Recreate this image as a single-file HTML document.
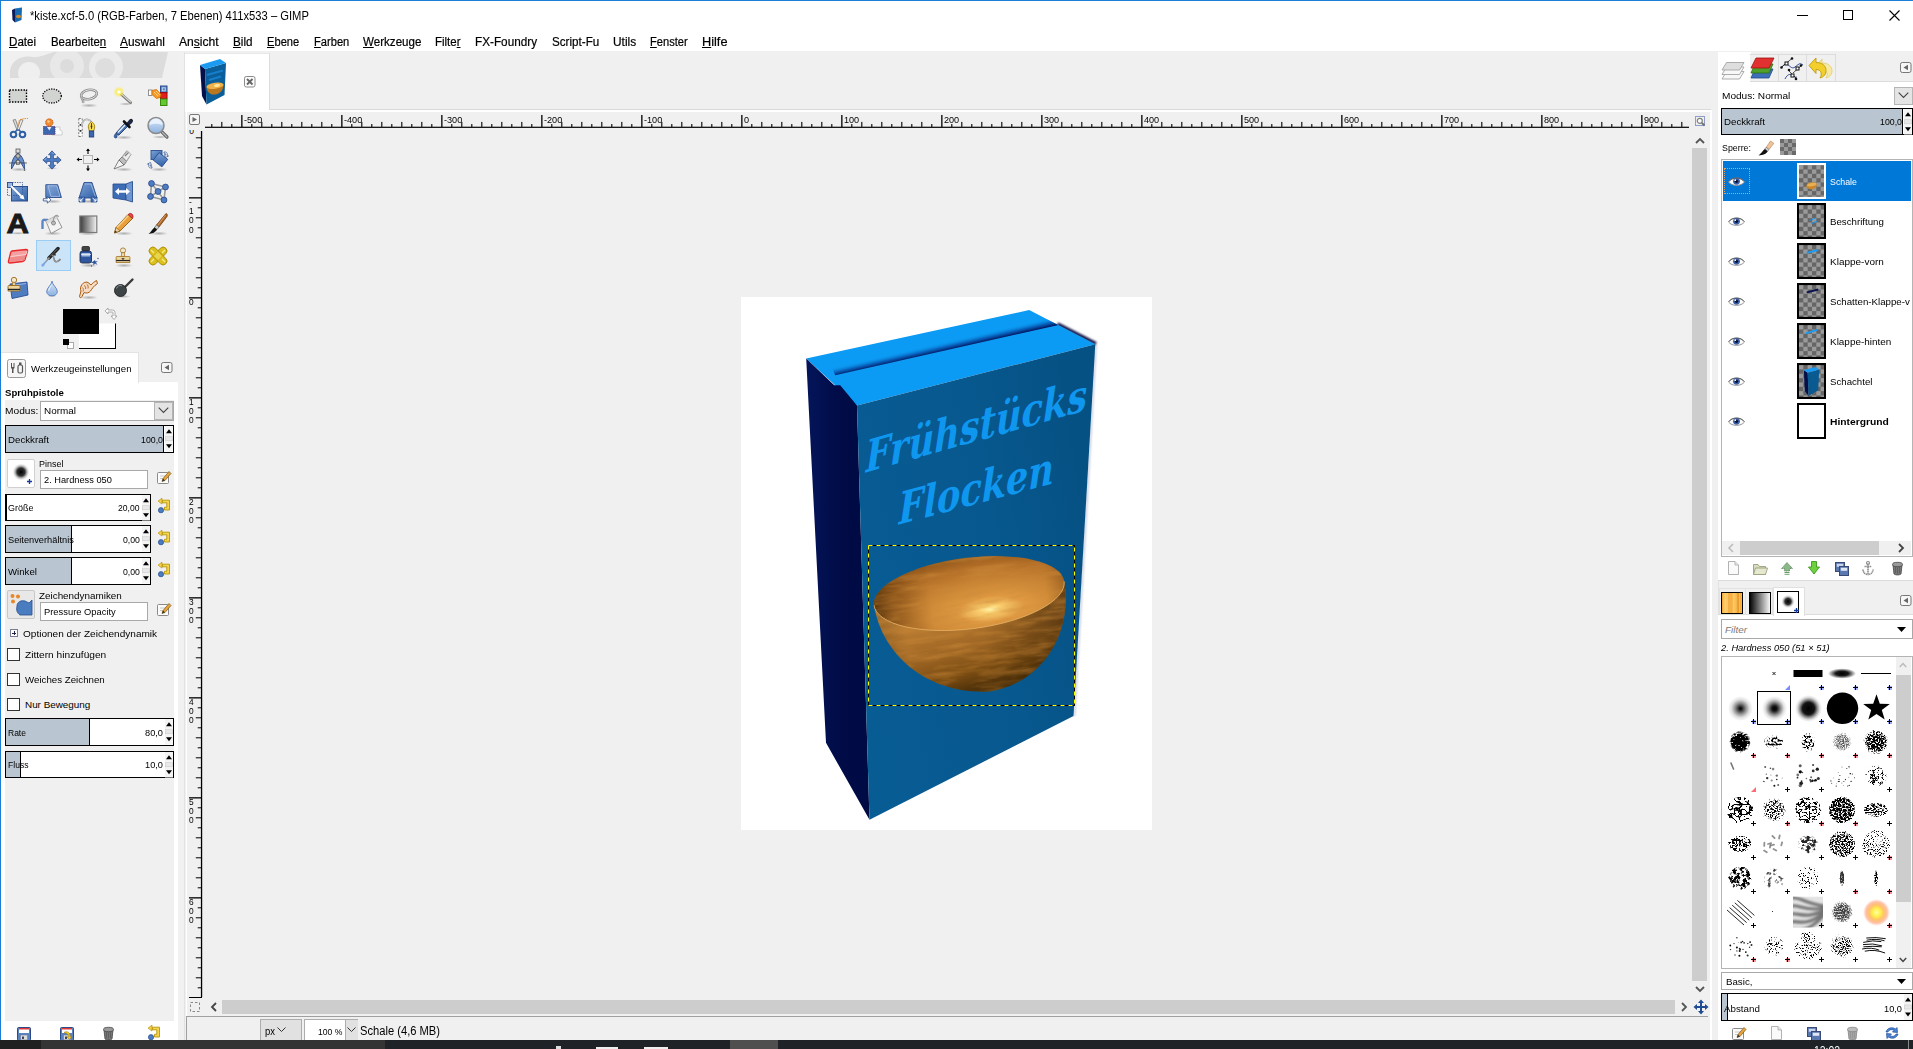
<!DOCTYPE html>
<html><head><meta charset="utf-8"><title>GIMP</title>
<style>
html,body{margin:0;padding:0;}
body{width:1913px;height:1049px;overflow:hidden;background:#f0f0f0;font-family:"Liberation Sans",sans-serif;position:relative;}
div{position:absolute;box-sizing:border-box;}
svg{position:absolute;overflow:visible;}
.t{font-family:"Liberation Sans",sans-serif;}
</style></head><body>
<div style="left:0px;top:0px;width:1913px;height:31px;background:#fff;"></div>
<div style="left:0px;top:31px;width:1913px;height:20px;background:#fff;"></div>
<div style="left:0px;top:0px;width:1913px;height:1px;background:#1a7fd4;"></div>
<div style="left:0px;top:0px;width:1px;height:1040px;background:#1a7fd4;"></div>
<svg style="left:11px;top:7px" width="12" height="17" viewBox="0 0 12 17"><polygon points="1,3 4,1.5 4,15.5 1.5,13" fill="#0a1a5a"/><polygon points="4,1.5 11,0.5 10.5,13 4,15.5" fill="#1769b0"/><polygon points="1,3 8,1 11,0.5 4,2.2" fill="#2a9cf0"/><ellipse cx="7.5" cy="9.5" rx="2.6" ry="1.8" fill="#d08a2a"/></svg>
<div class="t" style="left:30.3px;top:7.7px;height:16px;line-height:16px;font-size:12px;color:#000;white-space:nowrap;transform-origin:0 50%;transform:scaleX(0.934);">*kiste.xcf-5.0 (RGB-Farben, 7 Ebenen) 411x533 – GIMP</div>
<div style="left:1797px;top:15px;width:11px;height:1px;background:#000;"></div>
<div style="left:1843px;top:10px;width:10px;height:10px;border:1px solid #000;"></div>
<svg style="left:1889px;top:10px" width="11" height="11" viewBox="0 0 11 11"><path d="M0.5,0.5 L10.5,10.5 M10.5,0.5 L0.5,10.5" stroke="#000" stroke-width="1.1" fill="none"/></svg>
<div class="t" style="left:8.7px;top:33.7px;height:16px;line-height:17px;font-size:12px;-webkit-text-stroke:0.2px #000;white-space:nowrap;transform-origin:0 50%;transform:scaleX(0.967)"><u>D</u>atei</div>
<div class="t" style="left:50.5px;top:33.7px;height:16px;line-height:17px;font-size:12px;-webkit-text-stroke:0.2px #000;white-space:nowrap;transform-origin:0 50%;transform:scaleX(0.951)">Bearbeite<u>n</u></div>
<div class="t" style="left:120px;top:33.7px;height:16px;line-height:17px;font-size:12px;-webkit-text-stroke:0.2px #000;white-space:nowrap;transform-origin:0 50%;transform:scaleX(0.990)"><u>A</u>uswahl</div>
<div class="t" style="left:179.2px;top:33.7px;height:16px;line-height:17px;font-size:12px;-webkit-text-stroke:0.2px #000;white-space:nowrap;transform-origin:0 50%;transform:scaleX(1.009)">An<u>s</u>icht</div>
<div class="t" style="left:233.2px;top:33.7px;height:16px;line-height:17px;font-size:12px;-webkit-text-stroke:0.2px #000;white-space:nowrap;transform-origin:0 50%;transform:scaleX(0.975)"><u>B</u>ild</div>
<div class="t" style="left:267px;top:33.7px;height:16px;line-height:17px;font-size:12px;-webkit-text-stroke:0.2px #000;white-space:nowrap;transform-origin:0 50%;transform:scaleX(0.928)"><u>E</u>bene</div>
<div class="t" style="left:313.5px;top:33.7px;height:16px;line-height:17px;font-size:12px;-webkit-text-stroke:0.2px #000;white-space:nowrap;transform-origin:0 50%;transform:scaleX(0.928)"><u>F</u>arben</div>
<div class="t" style="left:362.7px;top:33.7px;height:16px;line-height:17px;font-size:12px;-webkit-text-stroke:0.2px #000;white-space:nowrap;transform-origin:0 50%;transform:scaleX(0.966)"><u>W</u>erkzeuge</div>
<div class="t" style="left:435.4px;top:33.7px;height:16px;line-height:17px;font-size:12px;-webkit-text-stroke:0.2px #000;white-space:nowrap;transform-origin:0 50%;transform:scaleX(0.956)">Filte<u>r</u></div>
<div class="t" style="left:475.2px;top:33.7px;height:16px;line-height:17px;font-size:12px;-webkit-text-stroke:0.2px #000;white-space:nowrap;transform-origin:0 50%;transform:scaleX(0.979)">FX-Foundry</div>
<div class="t" style="left:551.5px;top:33.7px;height:16px;line-height:17px;font-size:12px;-webkit-text-stroke:0.2px #000;white-space:nowrap;transform-origin:0 50%;transform:scaleX(0.970)">Script-Fu</div>
<div class="t" style="left:613px;top:33.7px;height:16px;line-height:17px;font-size:12px;-webkit-text-stroke:0.2px #000;white-space:nowrap;transform-origin:0 50%;transform:scaleX(0.990)">Utils</div>
<div class="t" style="left:650.4px;top:33.7px;height:16px;line-height:17px;font-size:12px;-webkit-text-stroke:0.2px #000;white-space:nowrap;transform-origin:0 50%;transform:scaleX(0.927)"><u>F</u>enster</div>
<div class="t" style="left:702px;top:33.7px;height:16px;line-height:17px;font-size:12px;-webkit-text-stroke:0.2px #000;white-space:nowrap;transform-origin:0 50%;transform:scaleX(1.062)"><u>H</u>ilfe</div>
<svg style="left:10px;top:52px;overflow:hidden" width="158" height="27" viewBox="0 0 158 27"><defs><clipPath id="wc"><path d="M0,26 L0,18 C2,8 12,3 22,5 C30,6 36,2 44,0 L158,0 L152,26 Z"/></clipPath></defs><g clip-path="url(#wc)"><rect width="158" height="27" fill="#dcdcdc"/><circle cx="19" cy="21" r="11" fill="#efefef"/><circle cx="57" cy="14" r="17" fill="#e8e8e8"/><circle cx="57" cy="14" r="7" fill="#dcdcdc"/><circle cx="96" cy="15" r="17" fill="#ebebeb"/><circle cx="95" cy="16" r="10" fill="#dedede"/></g></svg>
<div style="left:1px;top:381.5px;width:176.5px;height:658.5px;background:#fff;"></div>
<div style="left:1px;top:352px;width:137.5px;height:30.5px;background:#fff;border:1px solid #e3e3e3;border-bottom:none;border-left:none;"></div>
<div style="left:5px;top:400px;width:169px;height:620.5px;background:#f0f0f0;"></div>
<div style="left:177.5px;top:52px;width:7px;height:988px;background:#f1f1f1;"></div>
<div style="left:184.2px;top:52px;width:1px;height:988px;background:#e2e2e2;"></div>
<div style="left:185px;top:53px;width:84.5px;height:59px;background:#fff;border-right:1px solid #dcdcdc;border-top:1px solid #e8e8e8;"></div>
<div style="left:269px;top:109px;width:1442px;height:1px;background:#dadada;"></div>
<div style="left:186px;top:110px;width:1525px;height:2px;background:#fff;"></div>
<div style="left:1710px;top:110px;width:1.5px;height:930px;background:#fff;"></div>
<div style="left:186px;top:110px;width:1px;height:930px;background:#fff;"></div>
<div style="left:186px;top:1016px;width:1522px;height:1px;background:#a0a0a0;"></div>
<div style="left:186px;top:1016px;width:1px;height:24px;background:#a0a0a0;"></div>
<div style="left:259.5px;top:1018.5px;width:42.5px;height:24px;background:#e1e1e1;border:1px solid #adadad;"></div>
<div class="t" style="left:264.6px;top:1023.7px;height:15px;line-height:15px;font-size:11px;color:#000;white-space:nowrap;transform-origin:0 50%;transform:scaleX(0.861);">px</div>
<svg style="left:277px;top:1027px" width="9" height="6" viewBox="0 0 9 6"><path d="M0.5,0.5 L4.5,4.5 L8.5,0.5" stroke="#333" fill="none"/></svg>
<div style="left:303.5px;top:1018.5px;width:54.5px;height:24px;background:#fff;border:1px solid #adadad;"></div>
<div style="left:345px;top:1019.5px;width:12.5px;height:22px;background:#e1e1e1;border-left:1px solid #adadad;"></div>
<div class="t" style="left:318px;top:1024.65px;height:13px;line-height:13px;font-size:9.9px;color:#000;white-space:nowrap;transform-origin:0 50%;transform:scaleX(0.873);">100 %</div>
<svg style="left:347px;top:1027px" width="9" height="6" viewBox="0 0 9 6"><path d="M0.5,0.5 L4.5,4.5 L8.5,0.5" stroke="#333" fill="none"/></svg>
<div class="t" style="left:360.3px;top:1023.3px;height:16px;line-height:16px;font-size:12px;color:#000;white-space:nowrap;transform-origin:0 50%;transform:scaleX(0.930);">Schale (4,6 MB)</div>
<svg style="left:0;top:0" width="1913" height="1049"><rect x="205" y="126.7" width="1484" height="1.2" fill="#000"/><rect x="211.25" y="124" width="1.1" height="3" fill="#000"/><rect x="221.25" y="121.9" width="1.1" height="5" fill="#000"/><rect x="231.25" y="124" width="1.1" height="3" fill="#000"/><rect x="241.2" y="115" width="1.3" height="12" fill="#000"/><rect x="251.25" y="124" width="1.1" height="3" fill="#000"/><rect x="261.25" y="121.9" width="1.1" height="5" fill="#000"/><rect x="271.25" y="124" width="1.1" height="3" fill="#000"/><rect x="281.25" y="121.9" width="1.1" height="5" fill="#000"/><rect x="291.25" y="124" width="1.1" height="3" fill="#000"/><rect x="301.25" y="121.9" width="1.1" height="5" fill="#000"/><rect x="311.25" y="124" width="1.1" height="3" fill="#000"/><rect x="321.25" y="121.9" width="1.1" height="5" fill="#000"/><rect x="331.25" y="124" width="1.1" height="3" fill="#000"/><rect x="341.2" y="115" width="1.3" height="12" fill="#000"/><rect x="351.25" y="124" width="1.1" height="3" fill="#000"/><rect x="361.25" y="121.9" width="1.1" height="5" fill="#000"/><rect x="371.25" y="124" width="1.1" height="3" fill="#000"/><rect x="381.25" y="121.9" width="1.1" height="5" fill="#000"/><rect x="391.25" y="124" width="1.1" height="3" fill="#000"/><rect x="401.25" y="121.9" width="1.1" height="5" fill="#000"/><rect x="411.25" y="124" width="1.1" height="3" fill="#000"/><rect x="421.25" y="121.9" width="1.1" height="5" fill="#000"/><rect x="431.25" y="124" width="1.1" height="3" fill="#000"/><rect x="441.2" y="115" width="1.3" height="12" fill="#000"/><rect x="451.25" y="124" width="1.1" height="3" fill="#000"/><rect x="461.25" y="121.9" width="1.1" height="5" fill="#000"/><rect x="471.25" y="124" width="1.1" height="3" fill="#000"/><rect x="481.25" y="121.9" width="1.1" height="5" fill="#000"/><rect x="491.25" y="124" width="1.1" height="3" fill="#000"/><rect x="501.25" y="121.9" width="1.1" height="5" fill="#000"/><rect x="511.25" y="124" width="1.1" height="3" fill="#000"/><rect x="521.25" y="121.9" width="1.1" height="5" fill="#000"/><rect x="531.25" y="124" width="1.1" height="3" fill="#000"/><rect x="541.2" y="115" width="1.3" height="12" fill="#000"/><rect x="551.25" y="124" width="1.1" height="3" fill="#000"/><rect x="561.25" y="121.9" width="1.1" height="5" fill="#000"/><rect x="571.25" y="124" width="1.1" height="3" fill="#000"/><rect x="581.25" y="121.9" width="1.1" height="5" fill="#000"/><rect x="591.25" y="124" width="1.1" height="3" fill="#000"/><rect x="601.25" y="121.9" width="1.1" height="5" fill="#000"/><rect x="611.25" y="124" width="1.1" height="3" fill="#000"/><rect x="621.25" y="121.9" width="1.1" height="5" fill="#000"/><rect x="631.25" y="124" width="1.1" height="3" fill="#000"/><rect x="641.2" y="115" width="1.3" height="12" fill="#000"/><rect x="651.25" y="124" width="1.1" height="3" fill="#000"/><rect x="661.25" y="121.9" width="1.1" height="5" fill="#000"/><rect x="671.25" y="124" width="1.1" height="3" fill="#000"/><rect x="681.25" y="121.9" width="1.1" height="5" fill="#000"/><rect x="691.25" y="124" width="1.1" height="3" fill="#000"/><rect x="701.25" y="121.9" width="1.1" height="5" fill="#000"/><rect x="711.25" y="124" width="1.1" height="3" fill="#000"/><rect x="721.25" y="121.9" width="1.1" height="5" fill="#000"/><rect x="731.25" y="124" width="1.1" height="3" fill="#000"/><rect x="741.2" y="115" width="1.3" height="12" fill="#000"/><rect x="751.25" y="124" width="1.1" height="3" fill="#000"/><rect x="761.25" y="121.9" width="1.1" height="5" fill="#000"/><rect x="771.25" y="124" width="1.1" height="3" fill="#000"/><rect x="781.25" y="121.9" width="1.1" height="5" fill="#000"/><rect x="791.25" y="124" width="1.1" height="3" fill="#000"/><rect x="801.25" y="121.9" width="1.1" height="5" fill="#000"/><rect x="811.25" y="124" width="1.1" height="3" fill="#000"/><rect x="821.25" y="121.9" width="1.1" height="5" fill="#000"/><rect x="831.25" y="124" width="1.1" height="3" fill="#000"/><rect x="841.2" y="115" width="1.3" height="12" fill="#000"/><rect x="851.25" y="124" width="1.1" height="3" fill="#000"/><rect x="861.25" y="121.9" width="1.1" height="5" fill="#000"/><rect x="871.25" y="124" width="1.1" height="3" fill="#000"/><rect x="881.25" y="121.9" width="1.1" height="5" fill="#000"/><rect x="891.25" y="124" width="1.1" height="3" fill="#000"/><rect x="901.25" y="121.9" width="1.1" height="5" fill="#000"/><rect x="911.25" y="124" width="1.1" height="3" fill="#000"/><rect x="921.25" y="121.9" width="1.1" height="5" fill="#000"/><rect x="931.25" y="124" width="1.1" height="3" fill="#000"/><rect x="941.2" y="115" width="1.3" height="12" fill="#000"/><rect x="951.25" y="124" width="1.1" height="3" fill="#000"/><rect x="961.25" y="121.9" width="1.1" height="5" fill="#000"/><rect x="971.25" y="124" width="1.1" height="3" fill="#000"/><rect x="981.25" y="121.9" width="1.1" height="5" fill="#000"/><rect x="991.25" y="124" width="1.1" height="3" fill="#000"/><rect x="1001.25" y="121.9" width="1.1" height="5" fill="#000"/><rect x="1011.25" y="124" width="1.1" height="3" fill="#000"/><rect x="1021.25" y="121.9" width="1.1" height="5" fill="#000"/><rect x="1031.25" y="124" width="1.1" height="3" fill="#000"/><rect x="1041.2" y="115" width="1.3" height="12" fill="#000"/><rect x="1051.25" y="124" width="1.1" height="3" fill="#000"/><rect x="1061.25" y="121.9" width="1.1" height="5" fill="#000"/><rect x="1071.25" y="124" width="1.1" height="3" fill="#000"/><rect x="1081.25" y="121.9" width="1.1" height="5" fill="#000"/><rect x="1091.25" y="124" width="1.1" height="3" fill="#000"/><rect x="1101.25" y="121.9" width="1.1" height="5" fill="#000"/><rect x="1111.25" y="124" width="1.1" height="3" fill="#000"/><rect x="1121.25" y="121.9" width="1.1" height="5" fill="#000"/><rect x="1131.25" y="124" width="1.1" height="3" fill="#000"/><rect x="1141.2" y="115" width="1.3" height="12" fill="#000"/><rect x="1151.25" y="124" width="1.1" height="3" fill="#000"/><rect x="1161.25" y="121.9" width="1.1" height="5" fill="#000"/><rect x="1171.25" y="124" width="1.1" height="3" fill="#000"/><rect x="1181.25" y="121.9" width="1.1" height="5" fill="#000"/><rect x="1191.25" y="124" width="1.1" height="3" fill="#000"/><rect x="1201.25" y="121.9" width="1.1" height="5" fill="#000"/><rect x="1211.25" y="124" width="1.1" height="3" fill="#000"/><rect x="1221.25" y="121.9" width="1.1" height="5" fill="#000"/><rect x="1231.25" y="124" width="1.1" height="3" fill="#000"/><rect x="1241.2" y="115" width="1.3" height="12" fill="#000"/><rect x="1251.25" y="124" width="1.1" height="3" fill="#000"/><rect x="1261.25" y="121.9" width="1.1" height="5" fill="#000"/><rect x="1271.25" y="124" width="1.1" height="3" fill="#000"/><rect x="1281.25" y="121.9" width="1.1" height="5" fill="#000"/><rect x="1291.25" y="124" width="1.1" height="3" fill="#000"/><rect x="1301.25" y="121.9" width="1.1" height="5" fill="#000"/><rect x="1311.25" y="124" width="1.1" height="3" fill="#000"/><rect x="1321.25" y="121.9" width="1.1" height="5" fill="#000"/><rect x="1331.25" y="124" width="1.1" height="3" fill="#000"/><rect x="1341.2" y="115" width="1.3" height="12" fill="#000"/><rect x="1351.25" y="124" width="1.1" height="3" fill="#000"/><rect x="1361.25" y="121.9" width="1.1" height="5" fill="#000"/><rect x="1371.25" y="124" width="1.1" height="3" fill="#000"/><rect x="1381.25" y="121.9" width="1.1" height="5" fill="#000"/><rect x="1391.25" y="124" width="1.1" height="3" fill="#000"/><rect x="1401.25" y="121.9" width="1.1" height="5" fill="#000"/><rect x="1411.25" y="124" width="1.1" height="3" fill="#000"/><rect x="1421.25" y="121.9" width="1.1" height="5" fill="#000"/><rect x="1431.25" y="124" width="1.1" height="3" fill="#000"/><rect x="1441.2" y="115" width="1.3" height="12" fill="#000"/><rect x="1451.25" y="124" width="1.1" height="3" fill="#000"/><rect x="1461.25" y="121.9" width="1.1" height="5" fill="#000"/><rect x="1471.25" y="124" width="1.1" height="3" fill="#000"/><rect x="1481.25" y="121.9" width="1.1" height="5" fill="#000"/><rect x="1491.25" y="124" width="1.1" height="3" fill="#000"/><rect x="1501.25" y="121.9" width="1.1" height="5" fill="#000"/><rect x="1511.25" y="124" width="1.1" height="3" fill="#000"/><rect x="1521.25" y="121.9" width="1.1" height="5" fill="#000"/><rect x="1531.25" y="124" width="1.1" height="3" fill="#000"/><rect x="1541.2" y="115" width="1.3" height="12" fill="#000"/><rect x="1551.25" y="124" width="1.1" height="3" fill="#000"/><rect x="1561.25" y="121.9" width="1.1" height="5" fill="#000"/><rect x="1571.25" y="124" width="1.1" height="3" fill="#000"/><rect x="1581.25" y="121.9" width="1.1" height="5" fill="#000"/><rect x="1591.25" y="124" width="1.1" height="3" fill="#000"/><rect x="1601.25" y="121.9" width="1.1" height="5" fill="#000"/><rect x="1611.25" y="124" width="1.1" height="3" fill="#000"/><rect x="1621.25" y="121.9" width="1.1" height="5" fill="#000"/><rect x="1631.25" y="124" width="1.1" height="3" fill="#000"/><rect x="1641.2" y="115" width="1.3" height="12" fill="#000"/><rect x="1651.25" y="124" width="1.1" height="3" fill="#000"/><rect x="1661.25" y="121.9" width="1.1" height="5" fill="#000"/><rect x="1671.25" y="124" width="1.1" height="3" fill="#000"/><rect x="1681.25" y="121.9" width="1.1" height="5" fill="#000"/><rect x="200.9" y="131" width="1.3" height="866" fill="#000"/><rect x="189" y="997" width="13" height="1" fill="#000"/><rect x="195.8" y="137.3" width="5.6" height="1" fill="#000"/><rect x="197.7" y="147.3" width="3.7" height="1" fill="#000"/><rect x="195.8" y="157.3" width="5.6" height="1" fill="#000"/><rect x="197.7" y="167.3" width="3.7" height="1" fill="#000"/><rect x="195.8" y="177.3" width="5.6" height="1" fill="#000"/><rect x="197.7" y="187.3" width="3.7" height="1" fill="#000"/><rect x="189" y="197.2" width="12" height="1.3" fill="#000"/><rect x="197.7" y="207.3" width="3.7" height="1" fill="#000"/><rect x="195.8" y="217.3" width="5.6" height="1" fill="#000"/><rect x="197.7" y="227.3" width="3.7" height="1" fill="#000"/><rect x="195.8" y="237.3" width="5.6" height="1" fill="#000"/><rect x="197.7" y="247.3" width="3.7" height="1" fill="#000"/><rect x="195.8" y="257.3" width="5.6" height="1" fill="#000"/><rect x="197.7" y="267.3" width="3.7" height="1" fill="#000"/><rect x="195.8" y="277.3" width="5.6" height="1" fill="#000"/><rect x="197.7" y="287.3" width="3.7" height="1" fill="#000"/><rect x="189" y="297.2" width="12" height="1.3" fill="#000"/><rect x="197.7" y="307.3" width="3.7" height="1" fill="#000"/><rect x="195.8" y="317.3" width="5.6" height="1" fill="#000"/><rect x="197.7" y="327.3" width="3.7" height="1" fill="#000"/><rect x="195.8" y="337.3" width="5.6" height="1" fill="#000"/><rect x="197.7" y="347.3" width="3.7" height="1" fill="#000"/><rect x="195.8" y="357.3" width="5.6" height="1" fill="#000"/><rect x="197.7" y="367.3" width="3.7" height="1" fill="#000"/><rect x="195.8" y="377.3" width="5.6" height="1" fill="#000"/><rect x="197.7" y="387.3" width="3.7" height="1" fill="#000"/><rect x="189" y="397.2" width="12" height="1.3" fill="#000"/><rect x="197.7" y="407.3" width="3.7" height="1" fill="#000"/><rect x="195.8" y="417.3" width="5.6" height="1" fill="#000"/><rect x="197.7" y="427.3" width="3.7" height="1" fill="#000"/><rect x="195.8" y="437.3" width="5.6" height="1" fill="#000"/><rect x="197.7" y="447.3" width="3.7" height="1" fill="#000"/><rect x="195.8" y="457.3" width="5.6" height="1" fill="#000"/><rect x="197.7" y="467.3" width="3.7" height="1" fill="#000"/><rect x="195.8" y="477.3" width="5.6" height="1" fill="#000"/><rect x="197.7" y="487.3" width="3.7" height="1" fill="#000"/><rect x="189" y="497.2" width="12" height="1.3" fill="#000"/><rect x="197.7" y="507.3" width="3.7" height="1" fill="#000"/><rect x="195.8" y="517.3" width="5.6" height="1" fill="#000"/><rect x="197.7" y="527.3" width="3.7" height="1" fill="#000"/><rect x="195.8" y="537.3" width="5.6" height="1" fill="#000"/><rect x="197.7" y="547.3" width="3.7" height="1" fill="#000"/><rect x="195.8" y="557.3" width="5.6" height="1" fill="#000"/><rect x="197.7" y="567.3" width="3.7" height="1" fill="#000"/><rect x="195.8" y="577.3" width="5.6" height="1" fill="#000"/><rect x="197.7" y="587.3" width="3.7" height="1" fill="#000"/><rect x="189" y="597.2" width="12" height="1.3" fill="#000"/><rect x="197.7" y="607.3" width="3.7" height="1" fill="#000"/><rect x="195.8" y="617.3" width="5.6" height="1" fill="#000"/><rect x="197.7" y="627.3" width="3.7" height="1" fill="#000"/><rect x="195.8" y="637.3" width="5.6" height="1" fill="#000"/><rect x="197.7" y="647.3" width="3.7" height="1" fill="#000"/><rect x="195.8" y="657.3" width="5.6" height="1" fill="#000"/><rect x="197.7" y="667.3" width="3.7" height="1" fill="#000"/><rect x="195.8" y="677.3" width="5.6" height="1" fill="#000"/><rect x="197.7" y="687.3" width="3.7" height="1" fill="#000"/><rect x="189" y="697.2" width="12" height="1.3" fill="#000"/><rect x="197.7" y="707.3" width="3.7" height="1" fill="#000"/><rect x="195.8" y="717.3" width="5.6" height="1" fill="#000"/><rect x="197.7" y="727.3" width="3.7" height="1" fill="#000"/><rect x="195.8" y="737.3" width="5.6" height="1" fill="#000"/><rect x="197.7" y="747.3" width="3.7" height="1" fill="#000"/><rect x="195.8" y="757.3" width="5.6" height="1" fill="#000"/><rect x="197.7" y="767.3" width="3.7" height="1" fill="#000"/><rect x="195.8" y="777.3" width="5.6" height="1" fill="#000"/><rect x="197.7" y="787.3" width="3.7" height="1" fill="#000"/><rect x="189" y="797.2" width="12" height="1.3" fill="#000"/><rect x="197.7" y="807.3" width="3.7" height="1" fill="#000"/><rect x="195.8" y="817.3" width="5.6" height="1" fill="#000"/><rect x="197.7" y="827.3" width="3.7" height="1" fill="#000"/><rect x="195.8" y="837.3" width="5.6" height="1" fill="#000"/><rect x="197.7" y="847.3" width="3.7" height="1" fill="#000"/><rect x="195.8" y="857.3" width="5.6" height="1" fill="#000"/><rect x="197.7" y="867.3" width="3.7" height="1" fill="#000"/><rect x="195.8" y="877.3" width="5.6" height="1" fill="#000"/><rect x="197.7" y="887.3" width="3.7" height="1" fill="#000"/><rect x="189" y="897.2" width="12" height="1.3" fill="#000"/><rect x="197.7" y="907.3" width="3.7" height="1" fill="#000"/><rect x="195.8" y="917.3" width="5.6" height="1" fill="#000"/><rect x="197.7" y="927.3" width="3.7" height="1" fill="#000"/><rect x="195.8" y="937.3" width="5.6" height="1" fill="#000"/><rect x="197.7" y="947.3" width="3.7" height="1" fill="#000"/><rect x="195.8" y="957.3" width="5.6" height="1" fill="#000"/><rect x="197.7" y="967.3" width="3.7" height="1" fill="#000"/><rect x="195.8" y="977.3" width="5.6" height="1" fill="#000"/><rect x="197.7" y="987.3" width="3.7" height="1" fill="#000"/></svg>
<div class="t" style="left:243.7px;top:114.35px;height:12px;line-height:12px;font-size:8.5px;color:#000;white-space:nowrap;transform-origin:0 50%;transform:scaleX(1.070);">-500</div>
<div class="t" style="left:343.7px;top:114.35px;height:12px;line-height:12px;font-size:8.5px;color:#000;white-space:nowrap;transform-origin:0 50%;transform:scaleX(1.070);">-400</div>
<div class="t" style="left:443.7px;top:114.35px;height:12px;line-height:12px;font-size:8.5px;color:#000;white-space:nowrap;transform-origin:0 50%;transform:scaleX(1.070);">-300</div>
<div class="t" style="left:543.7px;top:114.35px;height:12px;line-height:12px;font-size:8.5px;color:#000;white-space:nowrap;transform-origin:0 50%;transform:scaleX(1.070);">-200</div>
<div class="t" style="left:643.7px;top:114.35px;height:12px;line-height:12px;font-size:8.5px;color:#000;white-space:nowrap;transform-origin:0 50%;transform:scaleX(1.070);">-100</div>
<div class="t" style="left:743.7px;top:114.35px;height:12px;line-height:12px;font-size:8.5px;color:#000;white-space:nowrap;transform-origin:0 50%;transform:scaleX(1.070);">0</div>
<div class="t" style="left:843.7px;top:114.35px;height:12px;line-height:12px;font-size:8.5px;color:#000;white-space:nowrap;transform-origin:0 50%;transform:scaleX(1.070);">100</div>
<div class="t" style="left:943.7px;top:114.35px;height:12px;line-height:12px;font-size:8.5px;color:#000;white-space:nowrap;transform-origin:0 50%;transform:scaleX(1.070);">200</div>
<div class="t" style="left:1043.7px;top:114.35px;height:12px;line-height:12px;font-size:8.5px;color:#000;white-space:nowrap;transform-origin:0 50%;transform:scaleX(1.070);">300</div>
<div class="t" style="left:1143.7px;top:114.35px;height:12px;line-height:12px;font-size:8.5px;color:#000;white-space:nowrap;transform-origin:0 50%;transform:scaleX(1.070);">400</div>
<div class="t" style="left:1243.7px;top:114.35px;height:12px;line-height:12px;font-size:8.5px;color:#000;white-space:nowrap;transform-origin:0 50%;transform:scaleX(1.070);">500</div>
<div class="t" style="left:1343.7px;top:114.35px;height:12px;line-height:12px;font-size:8.5px;color:#000;white-space:nowrap;transform-origin:0 50%;transform:scaleX(1.070);">600</div>
<div class="t" style="left:1443.7px;top:114.35px;height:12px;line-height:12px;font-size:8.5px;color:#000;white-space:nowrap;transform-origin:0 50%;transform:scaleX(1.070);">700</div>
<div class="t" style="left:1543.7px;top:114.35px;height:12px;line-height:12px;font-size:8.5px;color:#000;white-space:nowrap;transform-origin:0 50%;transform:scaleX(1.070);">800</div>
<div class="t" style="left:1643.7px;top:114.35px;height:12px;line-height:12px;font-size:8.5px;color:#000;white-space:nowrap;transform-origin:0 50%;transform:scaleX(1.070);">900</div>
<div class="t" style="left:189.3px;top:195.75px;height:12px;line-height:12px;font-size:8.5px;color:#000;white-space:nowrap;transform-origin:0 50%;transform:scaleX(0.980);">-</div>
<div class="t" style="left:189.3px;top:205.05px;height:12px;line-height:12px;font-size:8.5px;color:#000;white-space:nowrap;transform-origin:0 50%;transform:scaleX(0.980);">1</div>
<div class="t" style="left:189.3px;top:214.35px;height:12px;line-height:12px;font-size:8.5px;color:#000;white-space:nowrap;transform-origin:0 50%;transform:scaleX(0.980);">0</div>
<div class="t" style="left:189.3px;top:223.65px;height:12px;line-height:12px;font-size:8.5px;color:#000;white-space:nowrap;transform-origin:0 50%;transform:scaleX(0.980);">0</div>
<div class="t" style="left:189.3px;top:295.75px;height:12px;line-height:12px;font-size:8.5px;color:#000;white-space:nowrap;transform-origin:0 50%;transform:scaleX(0.980);">0</div>
<div class="t" style="left:189.3px;top:395.75px;height:12px;line-height:12px;font-size:8.5px;color:#000;white-space:nowrap;transform-origin:0 50%;transform:scaleX(0.980);">1</div>
<div class="t" style="left:189.3px;top:405.05px;height:12px;line-height:12px;font-size:8.5px;color:#000;white-space:nowrap;transform-origin:0 50%;transform:scaleX(0.980);">0</div>
<div class="t" style="left:189.3px;top:414.35px;height:12px;line-height:12px;font-size:8.5px;color:#000;white-space:nowrap;transform-origin:0 50%;transform:scaleX(0.980);">0</div>
<div class="t" style="left:189.3px;top:495.75px;height:12px;line-height:12px;font-size:8.5px;color:#000;white-space:nowrap;transform-origin:0 50%;transform:scaleX(0.980);">2</div>
<div class="t" style="left:189.3px;top:505.05px;height:12px;line-height:12px;font-size:8.5px;color:#000;white-space:nowrap;transform-origin:0 50%;transform:scaleX(0.980);">0</div>
<div class="t" style="left:189.3px;top:514.35px;height:12px;line-height:12px;font-size:8.5px;color:#000;white-space:nowrap;transform-origin:0 50%;transform:scaleX(0.980);">0</div>
<div class="t" style="left:189.3px;top:595.75px;height:12px;line-height:12px;font-size:8.5px;color:#000;white-space:nowrap;transform-origin:0 50%;transform:scaleX(0.980);">3</div>
<div class="t" style="left:189.3px;top:605.05px;height:12px;line-height:12px;font-size:8.5px;color:#000;white-space:nowrap;transform-origin:0 50%;transform:scaleX(0.980);">0</div>
<div class="t" style="left:189.3px;top:614.35px;height:12px;line-height:12px;font-size:8.5px;color:#000;white-space:nowrap;transform-origin:0 50%;transform:scaleX(0.980);">0</div>
<div class="t" style="left:189.3px;top:695.75px;height:12px;line-height:12px;font-size:8.5px;color:#000;white-space:nowrap;transform-origin:0 50%;transform:scaleX(0.980);">4</div>
<div class="t" style="left:189.3px;top:705.05px;height:12px;line-height:12px;font-size:8.5px;color:#000;white-space:nowrap;transform-origin:0 50%;transform:scaleX(0.980);">0</div>
<div class="t" style="left:189.3px;top:714.35px;height:12px;line-height:12px;font-size:8.5px;color:#000;white-space:nowrap;transform-origin:0 50%;transform:scaleX(0.980);">0</div>
<div class="t" style="left:189.3px;top:795.75px;height:12px;line-height:12px;font-size:8.5px;color:#000;white-space:nowrap;transform-origin:0 50%;transform:scaleX(0.980);">5</div>
<div class="t" style="left:189.3px;top:805.05px;height:12px;line-height:12px;font-size:8.5px;color:#000;white-space:nowrap;transform-origin:0 50%;transform:scaleX(0.980);">0</div>
<div class="t" style="left:189.3px;top:814.35px;height:12px;line-height:12px;font-size:8.5px;color:#000;white-space:nowrap;transform-origin:0 50%;transform:scaleX(0.980);">0</div>
<div class="t" style="left:189.3px;top:895.75px;height:12px;line-height:12px;font-size:8.5px;color:#000;white-space:nowrap;transform-origin:0 50%;transform:scaleX(0.980);">6</div>
<div class="t" style="left:189.3px;top:905.05px;height:12px;line-height:12px;font-size:8.5px;color:#000;white-space:nowrap;transform-origin:0 50%;transform:scaleX(0.980);">0</div>
<div class="t" style="left:189.3px;top:914.35px;height:12px;line-height:12px;font-size:8.5px;color:#000;white-space:nowrap;transform-origin:0 50%;transform:scaleX(0.980);">0</div>
<div style="left:186px;top:130px;width:15px;height:6px;overflow:hidden"><div class="t" style="left:3.3px;top:-5.5px;height:12px;line-height:12px;font-size:8.5px;color:#000">0</div></div>
<svg style="left:189px;top:114px" width="12" height="12" viewBox="0 0 12 12"><rect x="0.5" y="0.5" width="10" height="10" rx="1.5" fill="#f4f4f4" stroke="#777"/><path d="M3.5,3 L8,5.5 L3.5,8 Z" fill="#666"/></svg>
<svg style="left:1694px;top:115px" width="12" height="12" viewBox="0 0 12 12"><rect x="1.500" y="1.500" width="9" height="9" fill="none" stroke="#2a4a9a" stroke-width="1" stroke-dasharray="1 1"/><circle cx="5.800" cy="5.800" r="2.500" fill="#fff" stroke="#808080" stroke-width="1.200"/><path d="M7.800,7.800 L10.500,10.500" stroke="#707070" stroke-width="1.800"/></svg>
<div style="left:1692px;top:148px;width:15px;height:833px;background:#cdcdcd;"></div>
<svg style="left:1695px;top:137px" width="10" height="7" viewBox="0 0 10 7"><path d="M1,6 L5,2 L9,6" stroke="#555" stroke-width="1.8" fill="none"/></svg>
<svg style="left:1695px;top:986px" width="10" height="7" viewBox="0 0 10 7"><path d="M1,1 L5,5 L9,1" stroke="#555" stroke-width="1.8" fill="none"/></svg>
<div style="left:222px;top:999.5px;width:1453px;height:14px;background:#cdcdcd;"></div>
<svg style="left:210px;top:1002px" width="7" height="10" viewBox="0 0 7 10"><path d="M6,1 L2,5 L6,9" stroke="#444" stroke-width="1.8" fill="none"/></svg>
<svg style="left:1681px;top:1002px" width="7" height="10" viewBox="0 0 7 10"><path d="M1,1 L5,5 L1,9" stroke="#555" stroke-width="1.8" fill="none"/></svg>
<svg style="left:190px;top:1002px" width="11" height="11" viewBox="0 0 11 11"><rect x="0.5" y="0.5" width="9" height="9" fill="none" stroke="#888" stroke-dasharray="2.5 2"/></svg>
<svg style="left:1693px;top:999px" width="16" height="16" viewBox="0 0 16 16"><path d="M8,0.5 L11,4 L9,4 L9,7 L12,7 L12,5 L15.5,8 L12,11 L12,9 L9,9 L9,12 L11,12 L8,15.5 L5,12 L7,12 L7,9 L4,9 L4,11 L0.5,8 L4,5 L4,7 L7,7 L7,4 L5,4 Z" fill="#1f4a94"/></svg>
<svg style="left:0;top:0" width="1913" height="1049">
<defs>
<linearGradient id="gfront" x1="857" y1="600" x2="1095" y2="560" gradientUnits="userSpaceOnUse"><stop offset="0" stop-color="#085c94"/><stop offset="0.6" stop-color="#07588e"/><stop offset="1" stop-color="#065184"/></linearGradient>
<linearGradient id="gleft" x1="806" y1="500" x2="868" y2="500" gradientUnits="userSpaceOnUse"><stop offset="0" stop-color="#04155a"/><stop offset="0.5" stop-color="#010c48"/><stop offset="1" stop-color="#000b44"/></linearGradient>
<linearGradient id="gshadow" x1="946" y1="350.5" x2="944" y2="341.8" gradientUnits="userSpaceOnUse"><stop offset="0" stop-color="#03145e" stop-opacity="1"/><stop offset="0.4" stop-color="#0545a0" stop-opacity="0.7"/><stop offset="1" stop-color="#0b9bf4" stop-opacity="0"/></linearGradient>
<radialGradient id="gin" cx="0.6" cy="0.76" r="0.8"><stop offset="0" stop-color="#fff3a8"/><stop offset="0.07" stop-color="#fbd070"/><stop offset="0.22" stop-color="#e09a42"/><stop offset="0.5" stop-color="#c98434"/><stop offset="0.8" stop-color="#b06c26"/><stop offset="1" stop-color="#8e561a"/></radialGradient>
<linearGradient id="ginl" x1="0" y1="0" x2="1" y2="0"><stop offset="0" stop-color="#3e2406" stop-opacity="0.8"/><stop offset="0.1" stop-color="#5a340a" stop-opacity="0.45"/><stop offset="0.3" stop-color="#6a3c0c" stop-opacity="0"/><stop offset="0.9" stop-color="#6a3c0c" stop-opacity="0"/><stop offset="1" stop-color="#5a3408" stop-opacity="0.3"/></linearGradient>
<linearGradient id="gout" x1="0" y1="0" x2="0.25" y2="1"><stop offset="0" stop-color="#cf9044"/><stop offset="0.3" stop-color="#ba7c32"/><stop offset="0.6" stop-color="#9e6624"/><stop offset="0.85" stop-color="#7a4c12"/><stop offset="1" stop-color="#52330a"/></linearGradient>
<linearGradient id="goutr" x1="0" y1="0" x2="1" y2="0"><stop offset="0" stop-color="#3a2204" stop-opacity="0.3"/><stop offset="0.15" stop-color="#3a2204" stop-opacity="0"/><stop offset="0.55" stop-color="#3a2204" stop-opacity="0"/><stop offset="1" stop-color="#2e1a02" stop-opacity="0.6"/></linearGradient>
<filter id="wood" x="0" y="0" width="1" height="1"><feTurbulence type="fractalNoise" baseFrequency="0.025 0.16" numOctaves="4" seed="4"/><feColorMatrix type="matrix" values="0 0 0 0 0.6  0 0 0 0 0.25  0 0 0 0 0.04  2.2 1.2 0 0 -1.45"/><feComposite in2="SourceGraphic" operator="in"/></filter>
<filter id="blur1"><feGaussianBlur stdDeviation="1.6"/></filter><filter id="blur2" x="-0.2" y="-0.2" width="1.4" height="1.4"><feGaussianBlur stdDeviation="0.9"/></filter>
<clipPath id="ctop"><polygon points="806.2,358.6 1029.2,310.1 1095.3,344.3 857,405.4"/></clipPath><clipPath id="cimg"><rect x="741" y="297" width="411" height="533"/></clipPath>
</defs>
<rect x="741" y="297" width="411" height="533" fill="#fff"/>
<g clip-path="url(#cimg)">
<path d="M1057.500,323.800 L1096,343.700" stroke="#06063a" stroke-width="3.200" opacity="1" filter="url(#blur2)"/><path d="M1095.800,345 L1074.300,716" stroke="#2a4a8a" stroke-width="1.600" opacity="0.350" filter="url(#blur2)"/>
<polygon points="806.2,358.6 1029.2,310.1 1095.3,344.3 857,405.4" fill="#0b9bf4"/>
<polygon points="835.2,375.3 1058.6,324.9 1055,316.5 831.5,366.5" fill="url(#gshadow)" clip-path="url(#ctop)"/>
<polygon points="806.2,358.6 834.3,385.3 840.2,385.3 857,405.4 869.5,819.8 826,742.8" fill="url(#gleft)"/>
<polygon points="857,405.4 1095.3,344.3 1073.5,716 869.5,819.8" fill="url(#gfront)"/>
<g font-family="'DejaVu Serif','Liberation Serif',serif" font-weight="bold" font-style="italic" fill="#0f97f0">
<text transform="translate(865.7,472.5) skewY(-15.8)" font-size="44" id="txt1" textLength="221.5" lengthAdjust="spacingAndGlyphs">Frühstücks</text>
<text transform="translate(898.8,524.5) skewY(-14.9)" font-size="44" id="txt2" textLength="155" lengthAdjust="spacingAndGlyphs">Flocken</text>
</g>
<!-- bowl -->
<g transform="translate(969.1,593.3) rotate(-7.2)">
<path d="M-95.8,0 C-94,52 -52,96 8,100 C62,98 98,52 95.8,0 Z" fill="url(#gout)"/>
<path d="M-95.8,0 C-94,52 -52,96 8,100 C62,98 98,52 95.8,0 Z" fill="url(#goutr)"/>
<path d="M-95.8,0 C-94,52 -52,96 8,100 C62,98 98,52 95.8,0 Z" fill="#000" filter="url(#wood)" opacity="0.5"/>
<ellipse cx="0" cy="0" rx="95.8" ry="35.5" fill="url(#gin)"/>
<ellipse cx="0" cy="0" rx="95.8" ry="35.5" fill="url(#ginl)"/>
<ellipse cx="0" cy="0" rx="95.8" ry="35.5" fill="#000" filter="url(#wood)" opacity="0.55"/>
<path d="M-95.8,0 A95.8,35.5 0 0 0 95.8,0" fill="none" stroke="#e9b66a" stroke-width="0.9" opacity="0.8"/>
</g>
</g>
<rect x="868.5" y="545.5" width="206" height="160" fill="none" stroke="#000" stroke-width="1"/>
<rect x="868.5" y="545.5" width="206" height="160" fill="none" stroke="#ffff00" stroke-width="1" stroke-dasharray="4 4"/>
</svg>
<svg style="left:7px;top:359px" width="19" height="19" viewBox="0 0 19 19"><rect x="0.5" y="0.5" width="18" height="18" rx="2" fill="#f6f6f6" stroke="#999"/><path d="M4,4 L4,9 L5,10 L5,14 L6.5,14 L6.5,10 L7.5,9 L7.5,4 L6.5,4 L6.5,8 L5,8 L5,4 Z" fill="#555"/><rect x="11" y="6" width="4.5" height="8" rx="1.5" fill="none" stroke="#555" stroke-width="1.2"/><rect x="12" y="3.5" width="2.5" height="2.5" fill="#555"/></svg>
<div class="t" style="left:30.7px;top:361.95px;height:13px;line-height:13px;font-size:9.9px;color:#000;white-space:nowrap;transform-origin:0 50%;transform:scaleX(0.981);">Werkzeugeinstellungen</div>
<svg style="left:161px;top:362px" width="12" height="12" viewBox="0 0 12 12"><rect x="0.5" y="0.5" width="10.5" height="10" rx="1.8" fill="#f6f6f6" stroke="#777"/><path d="M8,2.8 L3.5,5.5 L8,8.2 Z" fill="#666"/></svg>
<div class="t" style="left:5px;top:386.05px;height:13px;line-height:13px;font-size:9.9px;color:#000;white-space:nowrap;transform-origin:0 50%;transform:scaleX(0.975);font-weight:bold;">Sprühpistole</div>
<div class="t" style="left:5px;top:404.05px;height:13px;line-height:13px;font-size:9.9px;color:#000;white-space:nowrap;transform-origin:0 50%;transform:scaleX(1.032);">Modus:</div>
<div style="left:40px;top:400.5px;width:133.5px;height:20.5px;background:#fff;border:1px solid #a8a8a8;"></div>
<div style="left:154px;top:401.5px;width:19px;height:18.5px;background:#e4e4e4;border:1px solid #b5b5b5;"></div>
<svg style="left:158px;top:407px" width="11" height="7" viewBox="0 0 11 7"><path d="M0.7,0.7 L5.5,5.5 L10.3,0.7" stroke="#444" stroke-width="1.1" fill="none"/></svg>
<div class="t" style="left:43.5px;top:404.05px;height:13px;line-height:13px;font-size:9.9px;color:#000;white-space:nowrap;transform-origin:0 50%;transform:scaleX(1.003);">Normal</div>
<div style="left:5px;top:425px;width:169px;height:27.5px;background:#fff;border:1px solid #000;"></div>
<div style="left:6px;top:426px;width:157.5px;height:25.5px;background:#b9c5d0;border-right:1px solid #000;"></div>
<svg style="left:165px;top:426px" width="8" height="25.5" viewBox="0 0 8 25.5"><rect x="0" y="0" width="8" height="25.5" fill="#f4f4f4"/><path d="M1,7.25 L4,3.25 L7,7.25 Z" fill="#000"/><path d="M1,18.25 L4,22.25 L7,18.25 Z" fill="#000"/><rect x="0.5" y="10.75" width="7" height="4" fill="#e8e8e8" stroke="#ccc" stroke-width="0.6"/></svg>
<div class="t" style="left:7.5px;top:433.1px;height:13px;line-height:13px;font-size:9.9px;color:#000;white-space:nowrap;transform-origin:0 50%;transform:scaleX(0.981);">Deckkraft</div>
<div class="t" style="left:140.5px;top:433.1px;height:13px;line-height:13px;font-size:9.9px;color:#000;white-space:nowrap;transform-origin:0 50%;transform:scaleX(0.888);">100,0</div>
<div style="left:6.5px;top:458.5px;width:28.5px;height:29px;background:#fff;border:1px solid #d0d0d0;border-radius:2px;"></div>
<svg style="left:8px;top:460px" width="26" height="26" viewBox="0 0 26 26"><defs><radialGradient id="br1"><stop offset="0" stop-color="#000"/><stop offset="0.45" stop-color="#333"/><stop offset="1" stop-color="#fff" stop-opacity="0"/></radialGradient></defs><circle cx="13" cy="12" r="9" fill="url(#br1)"/><path d="M19,21.5 h5 M21.5,19 v5" stroke="#123a9a" stroke-width="1.3"/></svg>
<div class="t" style="left:39.4px;top:457.35px;height:13px;line-height:13px;font-size:9.9px;color:#000;white-space:nowrap;transform-origin:0 50%;transform:scaleX(0.909);">Pinsel</div>
<div style="left:39.5px;top:469.5px;width:108.5px;height:19.5px;background:#fff;border:1px solid #a8a8a8;"></div>
<div class="t" style="left:43.5px;top:472.85px;height:13px;line-height:13px;font-size:9.9px;color:#000;white-space:nowrap;transform-origin:0 50%;transform:scaleX(0.936);">2. Hardness 050</div>
<svg style="left:156.5px;top:470px" width="15" height="15" viewBox="0 0 15 15"><rect x="0.5" y="2.5" width="11" height="11" rx="1" fill="#fbfbfb" stroke="#8a8a8a"/><path d="M3,6 h6 M3,8.5 h4" stroke="#bbb" stroke-width="0.8"/><path d="M5,11.5 L6,8.5 L12,1.5 L14,3.5 L8,10.5 Z" fill="#e8a33a" stroke="#7a5a1a" stroke-width="0.7"/><path d="M5,11.5 L6,8.5 L8,10.5 Z" fill="#333"/></svg>
<div style="left:5px;top:493.5px;width:146px;height:27.5px;background:#fff;border:1px solid #000;"></div>
<div style="left:6px;top:494.5px;width:1px;height:25.5px;background:#b9c5d0;border-right:1px solid #000;"></div>
<svg style="left:142px;top:494.5px" width="8" height="25.5" viewBox="0 0 8 25.5"><rect x="0" y="0" width="8" height="25.5" fill="#f4f4f4"/><path d="M1,7.25 L4,3.25 L7,7.25 Z" fill="#000"/><path d="M1,18.25 L4,22.25 L7,18.25 Z" fill="#000"/><rect x="0.5" y="10.75" width="7" height="4" fill="#e8e8e8" stroke="#ccc" stroke-width="0.6"/></svg>
<div class="t" style="left:7.5px;top:501.1px;height:13px;line-height:13px;font-size:9.9px;color:#000;white-space:nowrap;transform-origin:0 50%;transform:scaleX(0.909);">Größe</div>
<div class="t" style="left:118px;top:501.1px;height:13px;line-height:13px;font-size:9.9px;color:#000;white-space:nowrap;transform-origin:0 50%;transform:scaleX(0.868);">20,00</div>
<svg style="left:157px;top:499px" width="14" height="15" viewBox="0 0 14 15"><path d="M5.5,1.2 H12.5 V11 H7.5 V8.3 H9.8 V3.8 H5.5 Z" fill="#f5d34a" stroke="#b8960a" stroke-width="0.9"/><path d="M1,4 L5.5,0.5 L5.5,7.5 Z" fill="#f5d34a" stroke="#b8960a" stroke-width="0.9" transform="translate(0.3,-1.3) scale(0.85)"/><circle cx="4" cy="11.2" r="2.6" fill="#4a7cc0" stroke="#2a4e8e" stroke-width="0.7"/></svg>
<div style="left:5px;top:525.2px;width:146px;height:27.5px;background:#fff;border:1px solid #000;"></div>
<div style="left:6px;top:526.2px;width:66.4px;height:25.5px;background:#b9c5d0;border-right:1px solid #000;"></div>
<svg style="left:142px;top:526.2px" width="8" height="25.5" viewBox="0 0 8 25.5"><rect x="0" y="0" width="8" height="25.5" fill="#f4f4f4"/><path d="M1,7.25 L4,3.25 L7,7.25 Z" fill="#000"/><path d="M1,18.25 L4,22.25 L7,18.25 Z" fill="#000"/><rect x="0.5" y="10.75" width="7" height="4" fill="#e8e8e8" stroke="#ccc" stroke-width="0.6"/></svg>
<div class="t" style="left:7.5px;top:533.1px;height:13px;line-height:13px;font-size:9.9px;color:#000;white-space:nowrap;transform-origin:0 50%;transform:scaleX(0.937);">Seitenverhältnis</div>
<div class="t" style="left:122.5px;top:533.1px;height:13px;line-height:13px;font-size:9.9px;color:#000;white-space:nowrap;transform-origin:0 50%;transform:scaleX(0.882);">0,00</div>
<svg style="left:157px;top:531px" width="14" height="15" viewBox="0 0 14 15"><path d="M5.5,1.2 H12.5 V11 H7.5 V8.3 H9.8 V3.8 H5.5 Z" fill="#f5d34a" stroke="#b8960a" stroke-width="0.9"/><path d="M1,4 L5.5,0.5 L5.5,7.5 Z" fill="#f5d34a" stroke="#b8960a" stroke-width="0.9" transform="translate(0.3,-1.3) scale(0.85)"/><circle cx="4" cy="11.2" r="2.6" fill="#4a7cc0" stroke="#2a4e8e" stroke-width="0.7"/></svg>
<div style="left:5px;top:557px;width:146px;height:27.5px;background:#fff;border:1px solid #000;"></div>
<div style="left:6px;top:558px;width:66.4px;height:25.5px;background:#b9c5d0;border-right:1px solid #000;"></div>
<svg style="left:142px;top:558px" width="8" height="25.5" viewBox="0 0 8 25.5"><rect x="0" y="0" width="8" height="25.5" fill="#f4f4f4"/><path d="M1,7.25 L4,3.25 L7,7.25 Z" fill="#000"/><path d="M1,18.25 L4,22.25 L7,18.25 Z" fill="#000"/><rect x="0.5" y="10.75" width="7" height="4" fill="#e8e8e8" stroke="#ccc" stroke-width="0.6"/></svg>
<div class="t" style="left:7.5px;top:565.1px;height:13px;line-height:13px;font-size:9.9px;color:#000;white-space:nowrap;transform-origin:0 50%;transform:scaleX(0.976);">Winkel</div>
<div class="t" style="left:122.5px;top:565.1px;height:13px;line-height:13px;font-size:9.9px;color:#000;white-space:nowrap;transform-origin:0 50%;transform:scaleX(0.882);">0,00</div>
<svg style="left:157px;top:563px" width="14" height="15" viewBox="0 0 14 15"><path d="M5.5,1.2 H12.5 V11 H7.5 V8.3 H9.8 V3.8 H5.5 Z" fill="#f5d34a" stroke="#b8960a" stroke-width="0.9"/><path d="M1,4 L5.5,0.5 L5.5,7.5 Z" fill="#f5d34a" stroke="#b8960a" stroke-width="0.9" transform="translate(0.3,-1.3) scale(0.85)"/><circle cx="4" cy="11.2" r="2.6" fill="#4a7cc0" stroke="#2a4e8e" stroke-width="0.7"/></svg>
<div style="left:6.5px;top:590px;width:28.5px;height:29px;background:#e8e8e8;border:1px solid #c8c8c8;border-radius:2px;"></div>
<svg style="left:8px;top:592px" width="26" height="26" viewBox="0 0 26 26"><circle cx="4.5" cy="4" r="2" fill="#e8862a"/><circle cx="10" cy="4.5" r="2" fill="#e8862a"/><circle cx="5" cy="9.5" r="2" fill="#e8862a"/><path d="M9,14 C9,10 13,8 17,9 L21,11 L24,8 L24,23 L12,23 C9,21 8,18 9,14 Z" fill="#4a7cc0" stroke="#2a4e8e" stroke-width="0.8"/></svg>
<div class="t" style="left:39.4px;top:589.35px;height:13px;line-height:13px;font-size:9.9px;color:#000;white-space:nowrap;transform-origin:0 50%;transform:scaleX(0.999);">Zeichendynamiken</div>
<div style="left:39.5px;top:602px;width:108.5px;height:19px;background:#fff;border:1px solid #a8a8a8;"></div>
<div class="t" style="left:43.5px;top:605.05px;height:13px;line-height:13px;font-size:9.9px;color:#000;white-space:nowrap;transform-origin:0 50%;transform:scaleX(0.948);">Pressure Opacity</div>
<svg style="left:156.5px;top:602px" width="15" height="15" viewBox="0 0 15 15"><rect x="0.5" y="2.5" width="11" height="11" rx="1" fill="#fbfbfb" stroke="#8a8a8a"/><path d="M3,6 h6 M3,8.5 h4" stroke="#bbb" stroke-width="0.8"/><path d="M5,11.5 L6,8.5 L12,1.5 L14,3.5 L8,10.5 Z" fill="#e8a33a" stroke="#7a5a1a" stroke-width="0.7"/><path d="M5,11.5 L6,8.5 L8,10.5 Z" fill="#333"/></svg>
<div style="left:10px;top:629px;width:8px;height:8px;background:#fff;border:1px solid #7a7a9a;"></div>
<div style="left:12px;top:632.5px;width:4px;height:1px;background:#224;"></div>
<div style="left:13.5px;top:631px;width:1px;height:4px;background:#224;"></div>
<div class="t" style="left:23.4px;top:627.15px;height:13px;line-height:13px;font-size:9.9px;color:#000;white-space:nowrap;transform-origin:0 50%;transform:scaleX(1.018);">Optionen der Zeichendynamik</div>
<div style="left:7.3px;top:648.4px;width:12.7px;height:12.7px;background:#fff;border:1px solid #333;"></div>
<div class="t" style="left:25px;top:648.05px;height:13px;line-height:13px;font-size:9.9px;color:#000;white-space:nowrap;transform-origin:0 50%;transform:scaleX(1.028);">Zittern hinzufügen</div>
<div style="left:7.3px;top:673.4px;width:12.7px;height:12.7px;background:#fff;border:1px solid #333;"></div>
<div class="t" style="left:25px;top:673.05px;height:13px;line-height:13px;font-size:9.9px;color:#000;white-space:nowrap;transform-origin:0 50%;transform:scaleX(0.984);">Weiches Zeichnen</div>
<div style="left:7.3px;top:698.4px;width:12.7px;height:12.7px;background:#fff;border:1px solid #333;"></div>
<div class="t" style="left:25px;top:698.05px;height:13px;line-height:13px;font-size:9.9px;color:#000;white-space:nowrap;transform-origin:0 50%;transform:scaleX(1.000);">Nur Bewegung</div>
<div style="left:5px;top:718.4px;width:169px;height:27.5px;background:#fff;border:1px solid #000;"></div>
<div style="left:6px;top:719.4px;width:83.7px;height:25.5px;background:#b9c5d0;border-right:1px solid #000;"></div>
<svg style="left:165px;top:719.4px" width="8" height="25.5" viewBox="0 0 8 25.5"><rect x="0" y="0" width="8" height="25.5" fill="#f4f4f4"/><path d="M1,7.25 L4,3.25 L7,7.25 Z" fill="#000"/><path d="M1,18.25 L4,22.25 L7,18.25 Z" fill="#000"/><rect x="0.5" y="10.75" width="7" height="4" fill="#e8e8e8" stroke="#ccc" stroke-width="0.6"/></svg>
<div class="t" style="left:7.5px;top:726.1px;height:13px;line-height:13px;font-size:9.9px;color:#000;white-space:nowrap;transform-origin:0 50%;transform:scaleX(0.861);">Rate</div>
<div class="t" style="left:144.5px;top:726.1px;height:13px;line-height:13px;font-size:9.9px;color:#000;white-space:nowrap;transform-origin:0 50%;transform:scaleX(0.934);">80,0</div>
<div style="left:5px;top:750.6px;width:169px;height:27.5px;background:#fff;border:1px solid #000;"></div>
<div style="left:6px;top:751.6px;width:14.5px;height:25.5px;background:#b9c5d0;border-right:1px solid #000;"></div>
<svg style="left:165px;top:751.6px" width="8" height="25.5" viewBox="0 0 8 25.5"><rect x="0" y="0" width="8" height="25.5" fill="#f4f4f4"/><path d="M1,7.25 L4,3.25 L7,7.25 Z" fill="#000"/><path d="M1,18.25 L4,22.25 L7,18.25 Z" fill="#000"/><rect x="0.5" y="10.75" width="7" height="4" fill="#e8e8e8" stroke="#ccc" stroke-width="0.6"/></svg>
<div class="t" style="left:7.5px;top:758.1px;height:13px;line-height:13px;font-size:9.9px;color:#000;white-space:nowrap;transform-origin:0 50%;transform:scaleX(0.867);">Fluss</div>
<div class="t" style="left:144.5px;top:758.1px;height:13px;line-height:13px;font-size:9.9px;color:#000;white-space:nowrap;transform-origin:0 50%;transform:scaleX(0.934);">10,0</div>
<div style="left:1717.5px;top:52px;width:1px;height:988px;background:#e2e2e2;"></div>
<div style="left:1718px;top:81.5px;width:195px;height:498px;background:#fff;"></div>
<div style="left:1718px;top:52px;width:32.5px;height:30px;background:#fff;"></div>
<div style="left:1750px;top:54px;width:86px;height:28px;background:#f0f0f0;border:1px solid #dcdcdc;border-left:none;"></div>
<div style="left:1778px;top:54px;width:1px;height:27px;background:#dcdcdc;"></div>
<div style="left:1806px;top:54px;width:1px;height:27px;background:#dcdcdc;"></div>
<div style="left:1750px;top:81px;width:163px;height:1px;background:#dcdcdc;"></div>
<svg style="left:1721px;top:56.500px" width="26" height="24" viewBox="0 0 26 24"><g stroke="#a4a4a4" stroke-width="0.900"><polygon points="1,22 18.500,22 23,14.500 5.500,14.500" fill="#f8f8f8"/><polygon points="1,17.500 18.500,17.500 23,10 5.500,10" fill="#f8f8f8"/><polygon points="1,13 18.500,13 23,5.500 5.500,5.500" fill="#dedede"/></g></svg>
<svg style="left:1750px;top:56px" width="27" height="25" viewBox="0 0 27 25"><polygon points="1,22 19,22 23,13 5,13" fill="#3d6fb8" stroke="#1f4788" stroke-width="0.8"/><polygon points="1,17 19,17 23,8 5,8" fill="#4ea02a" stroke="#2f7012" stroke-width="0.8"/><polygon points="1,12 19,12 24,2 6,2" fill="#e03030" stroke="#a01010" stroke-width="0.8"/></svg>
<svg style="left:1780px;top:57px" width="25" height="24" viewBox="0 0 25 24"><path d="M2,10 C8,2 10,14 15,10 S20,6 23,8 M5,22 C10,12 14,22 17,20" stroke="#2a4a9a" stroke-width="1" fill="none"/><path d="M1,10.5 L12,1.5 M9,14 L17,22 M13,16 L21,9" stroke="#222" stroke-width="0.8" fill="none"/><g fill="#fff" stroke="#111" stroke-width="1"><rect x="5" y="5" width="3" height="3"/><rect x="16" y="10" width="3" height="3"/><rect x="11" y="17" width="3" height="3"/></g><g fill="#111"><circle cx="1.5" cy="10.5" r="1.3"/><circle cx="12" cy="1.5" r="1.3"/><circle cx="9" cy="13" r="1.3"/><circle cx="16" cy="22" r="1.3"/><circle cx="21" cy="8.5" r="1.3"/></g></svg>
<svg style="left:1808px;top:56px" width="27" height="25" viewBox="0 0 27 25"><path d="M14,3 L14,7 C20,7 24,10 24,15 C24,18 22,21 18,22 C20,19 20,14 14,14 L14,17 L8,10 Z" fill="#f7e9a0" stroke="#e0cc70" stroke-width="0.8"/><path d="M8,2 L8,6.5 C14,6.5 18,9.5 18,14.5 C18,18 16,21 12,22 C14,19 14,13.5 8,13.5 L8,17.5 L1,9.5 Z" fill="#f2cf2a" stroke="#c09a0a" stroke-width="0.9"/></svg>
<svg style="left:1900px;top:62px" width="12" height="12" viewBox="0 0 12 12"><rect x="0.5" y="0.5" width="10.5" height="10" rx="1.8" fill="#f6f6f6" stroke="#777"/><path d="M8,2.8 L3.5,5.5 L8,8.2 Z" fill="#666"/></svg>
<div class="t" style="left:1721.5px;top:89.05px;height:13px;line-height:13px;font-size:9.9px;color:#000;white-space:nowrap;transform-origin:0 50%;transform:scaleX(1.021);">Modus: Normal</div>
<div style="left:1894px;top:86.5px;width:19px;height:18.5px;background:#e4e4e4;border:1px solid #b5b5b5;"></div>
<svg style="left:1898px;top:92px" width="11" height="7" viewBox="0 0 11 7"><path d="M0.7,0.7 L5.5,5.5 L10.3,0.7" stroke="#444" stroke-width="1.1" fill="none"/></svg>
<div style="left:1721px;top:107.5px;width:192px;height:27.5px;background:#fff;border:1px solid #000;"></div>
<div style="left:1722px;top:108.5px;width:180.5px;height:25.5px;background:#b9c5d0;border-right:1px solid #000;"></div>
<svg style="left:1904px;top:108.5px" width="8" height="25.5" viewBox="0 0 8 25.5"><rect x="0" y="0" width="8" height="25.5" fill="#f4f4f4"/><path d="M1,7.25 L4,3.25 L7,7.25 Z" fill="#000"/><path d="M1,18.25 L4,22.25 L7,18.25 Z" fill="#000"/><rect x="0.5" y="10.75" width="7" height="4" fill="#e8e8e8" stroke="#ccc" stroke-width="0.6"/></svg>
<div class="t" style="left:1723.5px;top:115.1px;height:13px;line-height:13px;font-size:9.9px;color:#000;white-space:nowrap;transform-origin:0 50%;transform:scaleX(0.981);">Deckkraft</div>
<div class="t" style="left:1879.5px;top:115.1px;height:13px;line-height:13px;font-size:9.9px;color:#000;white-space:nowrap;transform-origin:0 50%;transform:scaleX(0.888);">100,0</div>
<div class="t" style="left:1721.5px;top:140.95px;height:13px;line-height:13px;font-size:9.9px;color:#000;white-space:nowrap;transform-origin:0 50%;transform:scaleX(0.893);">Sperre:</div>
<svg style="left:1758px;top:139.500px" width="17" height="17" viewBox="0 0 17 17"><path d="M12.500,1 L15.800,3.300 L11,9.500 L8.200,7.300 Z" fill="#f0c49a" stroke="#b08050" stroke-width="0.600"/><path d="M8.200,7.300 L11,9.500 L9.600,11.300 L6.800,9.100 Z" fill="#d0d0d0" stroke="#666" stroke-width="0.600"/><path d="M6.800,9.100 L9.600,11.300 C8.500,14 5,15.200 0.500,15.500 C3.500,13.500 4.300,11 6.800,9.100 Z" fill="#111"/></svg>
<svg style="left:1780px;top:139px" width="16" height="16" viewBox="0 0 16 16"><rect x="0" y="0" width="4" height="4" fill="#6a6a6a"/><rect x="0" y="4" width="4" height="4" fill="#9a9a9a"/><rect x="0" y="8" width="4" height="4" fill="#6a6a6a"/><rect x="0" y="12" width="4" height="4" fill="#9a9a9a"/><rect x="4" y="0" width="4" height="4" fill="#9a9a9a"/><rect x="4" y="4" width="4" height="4" fill="#6a6a6a"/><rect x="4" y="8" width="4" height="4" fill="#9a9a9a"/><rect x="4" y="12" width="4" height="4" fill="#6a6a6a"/><rect x="8" y="0" width="4" height="4" fill="#6a6a6a"/><rect x="8" y="4" width="4" height="4" fill="#9a9a9a"/><rect x="8" y="8" width="4" height="4" fill="#6a6a6a"/><rect x="8" y="12" width="4" height="4" fill="#9a9a9a"/><rect x="12" y="0" width="4" height="4" fill="#9a9a9a"/><rect x="12" y="4" width="4" height="4" fill="#6a6a6a"/><rect x="12" y="8" width="4" height="4" fill="#9a9a9a"/><rect x="12" y="12" width="4" height="4" fill="#6a6a6a"/></svg>
<div style="left:1721px;top:159px;width:192px;height:397.5px;background:#fff;border:1px solid #b4b4b4;"></div>
<div style="left:1722.5px;top:161px;width:188.5px;height:40px;background:#0078d7;"></div>
<div style="left:1723.7px;top:167.7px;width:26.5px;height:26.2px;border:1px dotted #e8a060;"></div>
<svg style="left:1728px;top:175.5px" width="17" height="11" viewBox="0 0 17 11"><path d="M0.5,6 C4,0.800 13,0.800 16.500,6 C13,10.500 4,10.500 0.500,6 Z" fill="#fbfbfb" stroke="#8c8c8c" stroke-width="0.9"/><circle cx="8.5" cy="5.3" r="3.4" fill="#3a5fa8"/><circle cx="8.5" cy="5.3" r="1.6" fill="#0a1030"/><circle cx="7.3" cy="4.2" r="0.9" fill="#fff"/><path d="M0.800,5.600 C4,0.800 13,0.800 16.200,5.600" stroke="#5a5a5a" stroke-width="0.900" fill="none"/></svg>
<svg style="left:1797px;top:163px" width="29" height="36" viewBox="0 0 29 36"><rect width="29" height="36" fill="#fff"/><svg x="2" y="2" width="25" height="32" viewBox="0 0 26 33"><rect width="26" height="33" fill="#666"/><rect x="0" y="0" width="4.5" height="4.5" fill="#9a9a9a"/><rect x="9" y="0" width="4.5" height="4.5" fill="#9a9a9a"/><rect x="18" y="0" width="4.5" height="4.5" fill="#9a9a9a"/><rect x="4.5" y="4.5" width="4.5" height="4.5" fill="#9a9a9a"/><rect x="13.5" y="4.5" width="4.5" height="4.5" fill="#9a9a9a"/><rect x="22.5" y="4.5" width="3.5" height="4.5" fill="#9a9a9a"/><rect x="0" y="9" width="4.5" height="4.5" fill="#9a9a9a"/><rect x="9" y="9" width="4.5" height="4.5" fill="#9a9a9a"/><rect x="18" y="9" width="4.5" height="4.5" fill="#9a9a9a"/><rect x="4.5" y="13.5" width="4.5" height="4.5" fill="#9a9a9a"/><rect x="13.5" y="13.5" width="4.5" height="4.5" fill="#9a9a9a"/><rect x="22.5" y="13.5" width="3.5" height="4.5" fill="#9a9a9a"/><rect x="0" y="18" width="4.5" height="4.5" fill="#9a9a9a"/><rect x="9" y="18" width="4.5" height="4.5" fill="#9a9a9a"/><rect x="18" y="18" width="4.5" height="4.5" fill="#9a9a9a"/><rect x="4.5" y="22.5" width="4.5" height="4.5" fill="#9a9a9a"/><rect x="13.5" y="22.5" width="4.5" height="4.5" fill="#9a9a9a"/><rect x="22.5" y="22.5" width="3.5" height="4.5" fill="#9a9a9a"/><rect x="0" y="27" width="4.5" height="4.5" fill="#9a9a9a"/><rect x="9" y="27" width="4.5" height="4.5" fill="#9a9a9a"/><rect x="18" y="27" width="4.5" height="4.5" fill="#9a9a9a"/><rect x="4.5" y="31.5" width="4.5" height="1.5" fill="#9a9a9a"/><rect x="13.5" y="31.5" width="4.5" height="1.5" fill="#9a9a9a"/><rect x="22.5" y="31.5" width="3.5" height="1.5" fill="#9a9a9a"/><ellipse cx="13" cy="21.5" rx="5.5" ry="3.6" fill="#c8852a" transform="rotate(-10 13 21.5)"/><ellipse cx="13.3" cy="20.3" rx="5" ry="1.8" fill="#e8b050" transform="rotate(-10 13 20.3)"/></svg></svg>
<div class="t" style="left:1829.9px;top:174.85px;height:13px;line-height:13px;font-size:9.9px;color:#fff;white-space:nowrap;transform-origin:0 50%;transform:scaleX(0.892);">Schale</div>
<svg style="left:1728px;top:215.5px" width="17" height="11" viewBox="0 0 17 11"><path d="M0.5,6 C4,0.800 13,0.800 16.500,6 C13,10.500 4,10.500 0.500,6 Z" fill="#fbfbfb" stroke="#8c8c8c" stroke-width="0.9"/><circle cx="8.5" cy="5.3" r="3.4" fill="#3a5fa8"/><circle cx="8.5" cy="5.3" r="1.6" fill="#0a1030"/><circle cx="7.3" cy="4.2" r="0.9" fill="#fff"/><path d="M0.800,5.600 C4,0.800 13,0.800 16.200,5.600" stroke="#5a5a5a" stroke-width="0.900" fill="none"/></svg>
<svg style="left:1797px;top:203px" width="29" height="36" viewBox="0 0 29 36"><rect width="29" height="36" fill="#000"/><svg x="2" y="2" width="25" height="32" viewBox="0 0 26 33"><rect width="26" height="33" fill="#666"/><rect x="0" y="0" width="4.5" height="4.5" fill="#9a9a9a"/><rect x="9" y="0" width="4.5" height="4.5" fill="#9a9a9a"/><rect x="18" y="0" width="4.5" height="4.5" fill="#9a9a9a"/><rect x="4.5" y="4.5" width="4.5" height="4.5" fill="#9a9a9a"/><rect x="13.5" y="4.5" width="4.5" height="4.5" fill="#9a9a9a"/><rect x="22.5" y="4.5" width="3.5" height="4.5" fill="#9a9a9a"/><rect x="0" y="9" width="4.5" height="4.5" fill="#9a9a9a"/><rect x="9" y="9" width="4.5" height="4.5" fill="#9a9a9a"/><rect x="18" y="9" width="4.5" height="4.5" fill="#9a9a9a"/><rect x="4.5" y="13.5" width="4.5" height="4.5" fill="#9a9a9a"/><rect x="13.5" y="13.5" width="4.5" height="4.5" fill="#9a9a9a"/><rect x="22.5" y="13.5" width="3.5" height="4.5" fill="#9a9a9a"/><rect x="0" y="18" width="4.5" height="4.5" fill="#9a9a9a"/><rect x="9" y="18" width="4.5" height="4.5" fill="#9a9a9a"/><rect x="18" y="18" width="4.5" height="4.5" fill="#9a9a9a"/><rect x="4.5" y="22.5" width="4.5" height="4.5" fill="#9a9a9a"/><rect x="13.5" y="22.5" width="4.5" height="4.5" fill="#9a9a9a"/><rect x="22.5" y="22.5" width="3.5" height="4.5" fill="#9a9a9a"/><rect x="0" y="27" width="4.5" height="4.5" fill="#9a9a9a"/><rect x="9" y="27" width="4.5" height="4.5" fill="#9a9a9a"/><rect x="18" y="27" width="4.5" height="4.5" fill="#9a9a9a"/><rect x="4.5" y="31.5" width="4.5" height="1.5" fill="#9a9a9a"/><rect x="13.5" y="31.5" width="4.5" height="1.5" fill="#9a9a9a"/><rect x="22.5" y="31.5" width="3.5" height="1.5" fill="#9a9a9a"/><path d="M11,16 L17,13.5 M13,19 L19,16.5" stroke="#1a90e8" stroke-width="1.2" stroke-dasharray="1.5 0.8"/></svg></svg>
<div class="t" style="left:1829.9px;top:214.85px;height:13px;line-height:13px;font-size:9.9px;color:#000;white-space:nowrap;transform-origin:0 50%;transform:scaleX(0.981);">Beschriftung</div>
<svg style="left:1728px;top:255.5px" width="17" height="11" viewBox="0 0 17 11"><path d="M0.5,6 C4,0.800 13,0.800 16.500,6 C13,10.500 4,10.500 0.500,6 Z" fill="#fbfbfb" stroke="#8c8c8c" stroke-width="0.9"/><circle cx="8.5" cy="5.3" r="3.4" fill="#3a5fa8"/><circle cx="8.5" cy="5.3" r="1.6" fill="#0a1030"/><circle cx="7.3" cy="4.2" r="0.9" fill="#fff"/><path d="M0.800,5.600 C4,0.800 13,0.800 16.200,5.600" stroke="#5a5a5a" stroke-width="0.900" fill="none"/></svg>
<svg style="left:1797px;top:243px" width="29" height="36" viewBox="0 0 29 36"><rect width="29" height="36" fill="#000"/><svg x="2" y="2" width="25" height="32" viewBox="0 0 26 33"><rect width="26" height="33" fill="#666"/><rect x="0" y="0" width="4.5" height="4.5" fill="#9a9a9a"/><rect x="9" y="0" width="4.5" height="4.5" fill="#9a9a9a"/><rect x="18" y="0" width="4.5" height="4.5" fill="#9a9a9a"/><rect x="4.5" y="4.5" width="4.5" height="4.5" fill="#9a9a9a"/><rect x="13.5" y="4.5" width="4.5" height="4.5" fill="#9a9a9a"/><rect x="22.5" y="4.5" width="3.5" height="4.5" fill="#9a9a9a"/><rect x="0" y="9" width="4.5" height="4.5" fill="#9a9a9a"/><rect x="9" y="9" width="4.5" height="4.5" fill="#9a9a9a"/><rect x="18" y="9" width="4.5" height="4.5" fill="#9a9a9a"/><rect x="4.5" y="13.5" width="4.5" height="4.5" fill="#9a9a9a"/><rect x="13.5" y="13.5" width="4.5" height="4.5" fill="#9a9a9a"/><rect x="22.5" y="13.5" width="3.5" height="4.5" fill="#9a9a9a"/><rect x="0" y="18" width="4.5" height="4.5" fill="#9a9a9a"/><rect x="9" y="18" width="4.5" height="4.5" fill="#9a9a9a"/><rect x="18" y="18" width="4.5" height="4.5" fill="#9a9a9a"/><rect x="4.5" y="22.5" width="4.5" height="4.5" fill="#9a9a9a"/><rect x="13.5" y="22.5" width="4.5" height="4.5" fill="#9a9a9a"/><rect x="22.5" y="22.5" width="3.5" height="4.5" fill="#9a9a9a"/><rect x="0" y="27" width="4.5" height="4.5" fill="#9a9a9a"/><rect x="9" y="27" width="4.5" height="4.5" fill="#9a9a9a"/><rect x="18" y="27" width="4.5" height="4.5" fill="#9a9a9a"/><rect x="4.5" y="31.5" width="4.5" height="1.5" fill="#9a9a9a"/><rect x="13.5" y="31.5" width="4.5" height="1.5" fill="#9a9a9a"/><rect x="22.5" y="31.5" width="3.5" height="1.5" fill="#9a9a9a"/><path d="M8,8 L20,5" stroke="#1a9af0" stroke-width="2"/></svg></svg>
<div class="t" style="left:1829.9px;top:254.85px;height:13px;line-height:13px;font-size:9.9px;color:#000;white-space:nowrap;transform-origin:0 50%;transform:scaleX(1.012);">Klappe-vorn</div>
<svg style="left:1728px;top:295.5px" width="17" height="11" viewBox="0 0 17 11"><path d="M0.5,6 C4,0.800 13,0.800 16.500,6 C13,10.500 4,10.500 0.500,6 Z" fill="#fbfbfb" stroke="#8c8c8c" stroke-width="0.9"/><circle cx="8.5" cy="5.3" r="3.4" fill="#3a5fa8"/><circle cx="8.5" cy="5.3" r="1.6" fill="#0a1030"/><circle cx="7.3" cy="4.2" r="0.9" fill="#fff"/><path d="M0.800,5.600 C4,0.800 13,0.800 16.200,5.600" stroke="#5a5a5a" stroke-width="0.900" fill="none"/></svg>
<svg style="left:1797px;top:283px" width="29" height="36" viewBox="0 0 29 36"><rect width="29" height="36" fill="#000"/><svg x="2" y="2" width="25" height="32" viewBox="0 0 26 33"><rect width="26" height="33" fill="#666"/><rect x="0" y="0" width="4.5" height="4.5" fill="#9a9a9a"/><rect x="9" y="0" width="4.5" height="4.5" fill="#9a9a9a"/><rect x="18" y="0" width="4.5" height="4.5" fill="#9a9a9a"/><rect x="4.5" y="4.5" width="4.5" height="4.5" fill="#9a9a9a"/><rect x="13.5" y="4.5" width="4.5" height="4.5" fill="#9a9a9a"/><rect x="22.5" y="4.5" width="3.5" height="4.5" fill="#9a9a9a"/><rect x="0" y="9" width="4.5" height="4.5" fill="#9a9a9a"/><rect x="9" y="9" width="4.5" height="4.5" fill="#9a9a9a"/><rect x="18" y="9" width="4.5" height="4.5" fill="#9a9a9a"/><rect x="4.5" y="13.5" width="4.5" height="4.5" fill="#9a9a9a"/><rect x="13.5" y="13.5" width="4.5" height="4.5" fill="#9a9a9a"/><rect x="22.5" y="13.5" width="3.5" height="4.5" fill="#9a9a9a"/><rect x="0" y="18" width="4.5" height="4.5" fill="#9a9a9a"/><rect x="9" y="18" width="4.5" height="4.5" fill="#9a9a9a"/><rect x="18" y="18" width="4.5" height="4.5" fill="#9a9a9a"/><rect x="4.5" y="22.5" width="4.5" height="4.5" fill="#9a9a9a"/><rect x="13.5" y="22.5" width="4.5" height="4.5" fill="#9a9a9a"/><rect x="22.5" y="22.5" width="3.5" height="4.5" fill="#9a9a9a"/><rect x="0" y="27" width="4.5" height="4.5" fill="#9a9a9a"/><rect x="9" y="27" width="4.5" height="4.5" fill="#9a9a9a"/><rect x="18" y="27" width="4.5" height="4.5" fill="#9a9a9a"/><rect x="4.5" y="31.5" width="4.5" height="1.5" fill="#9a9a9a"/><rect x="13.5" y="31.5" width="4.5" height="1.5" fill="#9a9a9a"/><rect x="22.5" y="31.5" width="3.5" height="1.5" fill="#9a9a9a"/><path d="M8,7.5 L20,4.5" stroke="#0a1050" stroke-width="2"/></svg></svg>
<div class="t" style="left:1829.9px;top:294.85px;height:13px;line-height:13px;font-size:9.9px;color:#000;white-space:nowrap;transform-origin:0 50%;transform:scaleX(0.982);">Schatten-Klappe-v</div>
<svg style="left:1728px;top:335.5px" width="17" height="11" viewBox="0 0 17 11"><path d="M0.5,6 C4,0.800 13,0.800 16.500,6 C13,10.500 4,10.500 0.500,6 Z" fill="#fbfbfb" stroke="#8c8c8c" stroke-width="0.9"/><circle cx="8.5" cy="5.3" r="3.4" fill="#3a5fa8"/><circle cx="8.5" cy="5.3" r="1.6" fill="#0a1030"/><circle cx="7.3" cy="4.2" r="0.9" fill="#fff"/><path d="M0.800,5.600 C4,0.800 13,0.800 16.200,5.600" stroke="#5a5a5a" stroke-width="0.900" fill="none"/></svg>
<svg style="left:1797px;top:323px" width="29" height="36" viewBox="0 0 29 36"><rect width="29" height="36" fill="#000"/><svg x="2" y="2" width="25" height="32" viewBox="0 0 26 33"><rect width="26" height="33" fill="#666"/><rect x="0" y="0" width="4.5" height="4.5" fill="#9a9a9a"/><rect x="9" y="0" width="4.5" height="4.5" fill="#9a9a9a"/><rect x="18" y="0" width="4.5" height="4.5" fill="#9a9a9a"/><rect x="4.5" y="4.5" width="4.5" height="4.5" fill="#9a9a9a"/><rect x="13.5" y="4.5" width="4.5" height="4.5" fill="#9a9a9a"/><rect x="22.5" y="4.5" width="3.5" height="4.5" fill="#9a9a9a"/><rect x="0" y="9" width="4.5" height="4.5" fill="#9a9a9a"/><rect x="9" y="9" width="4.5" height="4.5" fill="#9a9a9a"/><rect x="18" y="9" width="4.5" height="4.5" fill="#9a9a9a"/><rect x="4.5" y="13.5" width="4.5" height="4.5" fill="#9a9a9a"/><rect x="13.5" y="13.5" width="4.5" height="4.5" fill="#9a9a9a"/><rect x="22.5" y="13.5" width="3.5" height="4.5" fill="#9a9a9a"/><rect x="0" y="18" width="4.5" height="4.5" fill="#9a9a9a"/><rect x="9" y="18" width="4.5" height="4.5" fill="#9a9a9a"/><rect x="18" y="18" width="4.5" height="4.5" fill="#9a9a9a"/><rect x="4.5" y="22.5" width="4.5" height="4.5" fill="#9a9a9a"/><rect x="13.5" y="22.5" width="4.5" height="4.5" fill="#9a9a9a"/><rect x="22.5" y="22.5" width="3.5" height="4.5" fill="#9a9a9a"/><rect x="0" y="27" width="4.5" height="4.5" fill="#9a9a9a"/><rect x="9" y="27" width="4.5" height="4.5" fill="#9a9a9a"/><rect x="18" y="27" width="4.5" height="4.5" fill="#9a9a9a"/><rect x="4.5" y="31.5" width="4.5" height="1.5" fill="#9a9a9a"/><rect x="13.5" y="31.5" width="4.5" height="1.5" fill="#9a9a9a"/><rect x="22.5" y="31.5" width="3.5" height="1.5" fill="#9a9a9a"/><path d="M7,8.5 L19,5" stroke="#1a9af0" stroke-width="2"/></svg></svg>
<div class="t" style="left:1829.9px;top:334.85px;height:13px;line-height:13px;font-size:9.9px;color:#000;white-space:nowrap;transform-origin:0 50%;transform:scaleX(1.007);">Klappe-hinten</div>
<svg style="left:1728px;top:375.5px" width="17" height="11" viewBox="0 0 17 11"><path d="M0.5,6 C4,0.800 13,0.800 16.500,6 C13,10.500 4,10.500 0.500,6 Z" fill="#fbfbfb" stroke="#8c8c8c" stroke-width="0.9"/><circle cx="8.5" cy="5.3" r="3.4" fill="#3a5fa8"/><circle cx="8.5" cy="5.3" r="1.6" fill="#0a1030"/><circle cx="7.3" cy="4.2" r="0.9" fill="#fff"/><path d="M0.800,5.600 C4,0.800 13,0.800 16.200,5.600" stroke="#5a5a5a" stroke-width="0.900" fill="none"/></svg>
<svg style="left:1797px;top:363px" width="29" height="36" viewBox="0 0 29 36"><rect width="29" height="36" fill="#000"/><svg x="2" y="2" width="25" height="32" viewBox="0 0 26 33"><rect width="26" height="33" fill="#666"/><rect x="0" y="0" width="4.5" height="4.5" fill="#9a9a9a"/><rect x="9" y="0" width="4.5" height="4.5" fill="#9a9a9a"/><rect x="18" y="0" width="4.5" height="4.5" fill="#9a9a9a"/><rect x="4.5" y="4.5" width="4.5" height="4.5" fill="#9a9a9a"/><rect x="13.5" y="4.5" width="4.5" height="4.5" fill="#9a9a9a"/><rect x="22.5" y="4.5" width="3.5" height="4.5" fill="#9a9a9a"/><rect x="0" y="9" width="4.5" height="4.5" fill="#9a9a9a"/><rect x="9" y="9" width="4.5" height="4.5" fill="#9a9a9a"/><rect x="18" y="9" width="4.5" height="4.5" fill="#9a9a9a"/><rect x="4.5" y="13.5" width="4.5" height="4.5" fill="#9a9a9a"/><rect x="13.5" y="13.5" width="4.5" height="4.5" fill="#9a9a9a"/><rect x="22.5" y="13.5" width="3.5" height="4.5" fill="#9a9a9a"/><rect x="0" y="18" width="4.5" height="4.5" fill="#9a9a9a"/><rect x="9" y="18" width="4.5" height="4.5" fill="#9a9a9a"/><rect x="18" y="18" width="4.5" height="4.5" fill="#9a9a9a"/><rect x="4.5" y="22.5" width="4.5" height="4.5" fill="#9a9a9a"/><rect x="13.5" y="22.5" width="4.5" height="4.5" fill="#9a9a9a"/><rect x="22.5" y="22.5" width="3.5" height="4.5" fill="#9a9a9a"/><rect x="0" y="27" width="4.5" height="4.5" fill="#9a9a9a"/><rect x="9" y="27" width="4.5" height="4.5" fill="#9a9a9a"/><rect x="18" y="27" width="4.5" height="4.5" fill="#9a9a9a"/><rect x="4.5" y="31.5" width="4.5" height="1.5" fill="#9a9a9a"/><rect x="13.5" y="31.5" width="4.5" height="1.5" fill="#9a9a9a"/><rect x="22.5" y="31.5" width="3.5" height="1.5" fill="#9a9a9a"/><polygon points="5,5 9,8 10,32 6,27" fill="#04104a"/><polygon points="9,8 21,4.5 20,26 10,32" fill="#0a5a92"/><polygon points="5,5 17,2 21,4.5 9,8" fill="#1a9af0"/></svg></svg>
<div class="t" style="left:1829.9px;top:374.85px;height:13px;line-height:13px;font-size:9.9px;color:#000;white-space:nowrap;transform-origin:0 50%;transform:scaleX(0.978);">Schachtel</div>
<svg style="left:1728px;top:415.5px" width="17" height="11" viewBox="0 0 17 11"><path d="M0.5,6 C4,0.800 13,0.800 16.500,6 C13,10.500 4,10.500 0.500,6 Z" fill="#fbfbfb" stroke="#8c8c8c" stroke-width="0.9"/><circle cx="8.5" cy="5.3" r="3.4" fill="#3a5fa8"/><circle cx="8.5" cy="5.3" r="1.6" fill="#0a1030"/><circle cx="7.3" cy="4.2" r="0.9" fill="#fff"/><path d="M0.800,5.600 C4,0.800 13,0.800 16.200,5.600" stroke="#5a5a5a" stroke-width="0.900" fill="none"/></svg>
<div style="left:1797px;top:403px;width:29px;height:36px;background:#fff;border:2px solid #000;"></div>
<div class="t" style="left:1829.9px;top:414.85px;height:13px;line-height:13px;font-size:9.9px;color:#000;white-space:nowrap;transform-origin:0 50%;transform:scaleX(1.042);font-weight:bold;">Hintergrund</div>
<div style="left:1722px;top:540.5px;width:189px;height:14.5px;background:#f0f0f0;"></div>
<div style="left:1740px;top:540.5px;width:139px;height:14.5px;background:#cdcdcd;"></div>
<svg style="left:1727px;top:543px" width="7" height="10" viewBox="0 0 7 10"><path d="M6,1 L2,5 L6,9" stroke="#bbb" stroke-width="1.6" fill="none"/></svg>
<svg style="left:1898px;top:543px" width="7" height="10" viewBox="0 0 7 10"><path d="M1,1 L5,5 L1,9" stroke="#444" stroke-width="1.8" fill="none"/></svg>
<svg style="left:1727px;top:561px" width="13" height="15" viewBox="0 0 13 15"><path d="M1.5,0.5 H8 L11.5,4 V13.5 H1.5 Z" fill="#fafafa" stroke="#aaa" stroke-width="0.9"/><path d="M8,0.5 V4 H11.5" fill="#e8e8e8" stroke="#aaa" stroke-width="0.8"/></svg>
<svg style="left:1753px;top:562px" width="15" height="13" viewBox="0 0 15 13"><path d="M0.5,12.5 V2.5 H5 L6.5,4.5 H12.5 V12.5 Z" fill="#d8dcc0" stroke="#9aa07a" stroke-width="0.9"/><path d="M0.5,12.5 L2.5,6 H14.5 L12.5,12.5 Z" fill="#e6e9d0" stroke="#9aa07a" stroke-width="0.9"/></svg>
<svg style="left:1781px;top:562px" width="12" height="14" viewBox="0 0 12 14"><path d="M6,0.5 L11.5,6.5 H8.5 V9 H3.5 V6.5 H0.5 Z" fill="#8ab88a" stroke="#4a7a4a" stroke-width="0.8" stroke-dasharray="1 0.6"/><rect x="3.5" y="10" width="5" height="1.2" fill="#6a9a6a"/><rect x="3.5" y="12" width="5" height="1" fill="#8ab88a"/></svg>
<svg style="left:1808px;top:561px" width="12" height="14" viewBox="0 0 12 14"><path d="M3.5,0.5 H8.5 V6 H11.5 L6,13 L0.5,6 H3.5 Z" fill="#6ed040" stroke="#3a9a1a" stroke-width="0.9"/></svg>
<svg style="left:1835px;top:562px" width="14" height="14" viewBox="0 0 14 14"><rect x="0.5" y="0.5" width="9" height="9" fill="#5a78b0" stroke="#3a4a78"/><rect x="1.8" y="1.8" width="6.4" height="3" fill="#c8d4ec"/><rect x="4.5" y="4.5" width="9" height="9" fill="#5a78b0" stroke="#3a4a78"/><rect x="5.8" y="5.8" width="6.4" height="3" fill="#dfe6f5"/></svg>
<svg style="left:1861px;top:561px" width="14" height="15" viewBox="0 0 14 15"><path d="M7,2.5 V13 M2,8.5 C2,12 5,13.5 7,13.5 C9,13.5 12,12 12,8.5 M3.5,5.5 H10.5" stroke="#888" stroke-width="1.6" fill="none" stroke-dasharray="1.3 0.5"/><circle cx="7" cy="2" r="1.5" fill="none" stroke="#888" stroke-width="1.1"/></svg>
<svg style="left:1891px;top:561px" width="13" height="15" viewBox="0 0 13 15"><path d="M2,4 H11 L10,13 C8,14.3 5,14.3 3,13 Z" fill="#777" stroke="#444" stroke-width="0.8"/><ellipse cx="6.5" cy="3.5" rx="5" ry="2.2" fill="#999" stroke="#444" stroke-width="0.8"/><path d="M4.5,6 V12 M6.5,6.3 V12.5 M8.5,6 V12" stroke="#555" stroke-width="0.7"/></svg>
<div style="left:1718px;top:579.5px;width:195px;height:1px;background:#dcdcdc;"></div>
<div style="left:1718px;top:614.5px;width:195px;height:425.5px;background:#fff;"></div>
<div style="left:1773px;top:586.5px;width:32px;height:29px;background:#fff;border:1px solid #e0e0e0;border-bottom:none;"></div>
<div style="left:1718px;top:614px;width:55px;height:1px;background:#dcdcdc;"></div>
<div style="left:1805px;top:614px;width:108px;height:1px;background:#dcdcdc;"></div>
<div style="left:1718.5px;top:588px;width:27.5px;height:26px;background:#f0f0f0;border:1px solid #e2e2e2;border-bottom:none;"></div>
<div style="left:1746px;top:588px;width:27px;height:26px;background:#f0f0f0;border:1px solid #e2e2e2;border-left:none;border-bottom:none;"></div>
<svg style="left:1721px;top:592px" width="22" height="22" viewBox="0 0 22 22"><defs><linearGradient id="pat" x1="0" x2="1" y1="0" y2="0"><stop offset="0" stop-color="#f0a030"/><stop offset="0.2" stop-color="#ffd070"/><stop offset="0.4" stop-color="#f0a030"/><stop offset="0.6" stop-color="#ffc860"/><stop offset="0.8" stop-color="#e89828"/><stop offset="1" stop-color="#ffc050"/></linearGradient></defs><rect x="0.5" y="0.5" width="21" height="21" fill="url(#pat)" stroke="#000"/><path d="M3,1 V21 M6.500,1 V21 M9,1 V21 M12.500,1 V21 M15,1 V21 M18.500,1 V21" stroke="#ffd27a" stroke-width="0.800" opacity="0.700"/></svg>
<svg style="left:1749px;top:592px" width="22" height="22" viewBox="0 0 22 22"><defs><linearGradient id="grd" x1="0" x2="1" y1="0" y2="0"><stop offset="0" stop-color="#000"/><stop offset="1" stop-color="#fff"/></linearGradient></defs><rect x="0.5" y="0.5" width="21" height="21" fill="url(#grd)" stroke="#000"/></svg>
<svg style="left:1777px;top:591px" width="23" height="23" viewBox="0 0 23 23"><rect x="0.5" y="0.5" width="21" height="21" fill="#fff" stroke="#000"/><circle cx="11" cy="10.5" r="7" fill="url(#br1)"/><path d="M17,19.5 h5 M19.5,17 v5" stroke="#123a9a" stroke-width="1.3"/></svg>
<svg style="left:1900px;top:595px" width="12" height="12" viewBox="0 0 12 12"><rect x="0.5" y="0.5" width="10.5" height="10" rx="1.8" fill="#f6f6f6" stroke="#777"/><path d="M8,2.8 L3.5,5.5 L8,8.2 Z" fill="#666"/></svg>
<div style="left:1721px;top:619px;width:191.5px;height:19.5px;background:#fff;border:1px solid #a8a8a8;"></div>
<div class="t" style="left:1725px;top:622.85px;height:13px;line-height:13px;font-size:9.9px;color:#7a7a7a;white-space:nowrap;transform-origin:0 50%;transform:scaleX(1.000);font-style:italic;">Filter</div>
<svg style="left:1897px;top:627px" width="9" height="5" viewBox="0 0 9 5"><path d="M0,0 H9 L4.5,5 Z" fill="#000"/></svg>
<div class="t" style="left:1721px;top:641.05px;height:13px;line-height:13px;font-size:9.9px;color:#000;white-space:nowrap;transform-origin:0 50%;transform:scaleX(0.945);font-style:italic;">2. Hardness 050 (51 × 51)</div>
<div style="left:1721px;top:655.5px;width:191.5px;height:313px;background:#fff;border:1px solid #b4b4b4;"></div>
<div style="left:1895.5px;top:656.5px;width:15.5px;height:311px;background:#f0f0f0;"></div>
<div style="left:1895.5px;top:674.5px;width:15.5px;height:227.5px;background:#cdcdcd;"></div>
<svg style="left:1899px;top:662px" width="8" height="6" viewBox="0 0 8 6"><path d="M0.8,5 L4,1.5 L7.2,5" stroke="#bbb" stroke-width="1.5" fill="none"/></svg>
<svg style="left:1899px;top:957px" width="8" height="6" viewBox="0 0 8 6"><path d="M0.8,1 L4,4.5 L7.2,1" stroke="#444" stroke-width="1.5" fill="none"/></svg>
<div style="left:1721px;top:972px;width:191.5px;height:18px;background:#fff;border:1px solid #a8a8a8;"></div>
<div class="t" style="left:1725.5px;top:974.65px;height:13px;line-height:13px;font-size:9.9px;color:#000;white-space:nowrap;transform-origin:0 50%;transform:scaleX(0.983);">Basic,</div>
<svg style="left:1897px;top:979px" width="9" height="5" viewBox="0 0 9 5"><path d="M0,0 H9 L4.5,5 Z" fill="#000"/></svg>
<div style="left:1721px;top:993px;width:192px;height:28px;background:#fff;border:1px solid #000;"></div>
<div style="left:1722px;top:994px;width:6px;height:26px;background:#b9c5d0;border-right:1px solid #000;"></div>
<svg style="left:1904px;top:994px" width="8" height="26" viewBox="0 0 8 26"><rect x="0" y="0" width="8" height="26" fill="#f4f4f4"/><path d="M1,7.5 L4,3.5 L7,7.5 Z" fill="#000"/><path d="M1,18.5 L4,22.5 L7,18.5 Z" fill="#000"/><rect x="0.5" y="11" width="7" height="4" fill="#e8e8e8" stroke="#ccc" stroke-width="0.6"/></svg>
<div class="t" style="left:1723.5px;top:1002.1px;height:13px;line-height:13px;font-size:9.9px;color:#000;white-space:nowrap;transform-origin:0 50%;transform:scaleX(0.991);">Abstand</div>
<div class="t" style="left:1883.5px;top:1002.1px;height:13px;line-height:13px;font-size:9.9px;color:#000;white-space:nowrap;transform-origin:0 50%;transform:scaleX(0.934);">10,0</div>
<svg style="left:0;top:0" width="1913" height="1049"><defs><radialGradient id="g1"><stop offset="0" stop-color="#000" stop-opacity="1"/><stop offset="0.55" stop-color="#000" stop-opacity="0.85"/><stop offset="1" stop-color="#000" stop-opacity="0"/></radialGradient><radialGradient id="g2"><stop offset="0" stop-color="#000" stop-opacity="1"/><stop offset="0.85" stop-color="#000" stop-opacity="1"/><stop offset="1" stop-color="#000" stop-opacity="0"/></radialGradient><radialGradient id="g3"><stop offset="0" stop-color="#000" stop-opacity="1"/><stop offset="0.45" stop-color="#000" stop-opacity="0.9"/><stop offset="1" stop-color="#000" stop-opacity="0"/></radialGradient><radialGradient id="g4"><stop offset="0" stop-color="#000" stop-opacity="1"/><stop offset="0.08" stop-color="#000" stop-opacity="0.92"/><stop offset="0.448" stop-color="#000" stop-opacity="0.42"/><stop offset="0.724" stop-color="#000" stop-opacity="0.12"/><stop offset="1" stop-color="#000" stop-opacity="0"/></radialGradient><radialGradient id="g5"><stop offset="0" stop-color="#000" stop-opacity="1"/><stop offset="0.2" stop-color="#000" stop-opacity="0.92"/><stop offset="0.52" stop-color="#000" stop-opacity="0.42"/><stop offset="0.76" stop-color="#000" stop-opacity="0.12"/><stop offset="1" stop-color="#000" stop-opacity="0"/></radialGradient><radialGradient id="g6"><stop offset="0" stop-color="#000" stop-opacity="1"/><stop offset="0.45" stop-color="#000" stop-opacity="0.92"/><stop offset="0.67" stop-color="#000" stop-opacity="0.42"/><stop offset="0.835" stop-color="#000" stop-opacity="0.12"/><stop offset="1" stop-color="#000" stop-opacity="0"/></radialGradient><filter id="s7" x="-0.1" y="-0.1" width="1.2" height="1.2" color-interpolation-filters="sRGB"><feTurbulence type="fractalNoise" baseFrequency="0.45" numOctaves="2" seed="1"/><feColorMatrix type="matrix" values="0 0 0 0 0 0 0 0 0 0 0 0 0 0 0 1 0 0 0 0"/><feComposite in2="SourceGraphic" operator="arithmetic" k1="7" k2="0" k3="-0.8" k4="-0.6"/></filter><filter id="s8" x="-0.1" y="-0.1" width="1.2" height="1.2" color-interpolation-filters="sRGB"><feTurbulence type="fractalNoise" baseFrequency="0.5" numOctaves="2" seed="2"/><feColorMatrix type="matrix" values="0 0 0 0 0 0 0 0 0 0 0 0 0 0 0 1 0 0 0 0"/><feComposite in2="SourceGraphic" operator="arithmetic" k1="9" k2="0" k3="-3.4" k4="-0.6"/></filter><filter id="s9" x="-0.1" y="-0.1" width="1.2" height="1.2" color-interpolation-filters="sRGB"><feTurbulence type="fractalNoise" baseFrequency="0.55" numOctaves="2" seed="3"/><feColorMatrix type="matrix" values="0 0 0 0 0 0 0 0 0 0 0 0 0 0 0 1 0 0 0 0"/><feComposite in2="SourceGraphic" operator="arithmetic" k1="9" k2="0" k3="-3.6" k4="-0.6"/></filter><filter id="s10" x="-0.1" y="-0.1" width="1.2" height="1.2" color-interpolation-filters="sRGB"><feTurbulence type="fractalNoise" baseFrequency="0.9" numOctaves="2" seed="4"/><feColorMatrix type="matrix" values="0 0 0 0 0 0 0 0 0 0 0 0 0 0 0 1 0 0 0 0"/><feComposite in2="SourceGraphic" operator="arithmetic" k1="3" k2="0" k3="-0.2" k4="-0.6"/></filter><filter id="s11" x="-0.1" y="-0.1" width="1.2" height="1.2" color-interpolation-filters="sRGB"><feTurbulence type="fractalNoise" baseFrequency="0.6" numOctaves="2" seed="5"/><feColorMatrix type="matrix" values="0 0 0 0 0 0 0 0 0 0 0 0 0 0 0 1 0 0 0 0"/><feComposite in2="SourceGraphic" operator="arithmetic" k1="9" k2="0" k3="-2.7" k4="-0.6"/></filter><filter id="s12" x="-0.1" y="-0.1" width="1.2" height="1.2" color-interpolation-filters="sRGB"><feTurbulence type="turbulence" baseFrequency="0.24" numOctaves="2" seed="9"/><feColorMatrix type="matrix" values="0 0 0 0 0 0 0 0 0 0 0 0 0 0 0 1 0 0 0 0"/><feComposite in2="SourceGraphic" operator="arithmetic" k1="-16" k2="0" k3="3.6" k4="-0.6"/></filter><filter id="s13" x="-0.1" y="-0.1" width="1.2" height="1.2" color-interpolation-filters="sRGB"><feTurbulence type="turbulence" baseFrequency="0.2" numOctaves="1" seed="11"/><feColorMatrix type="matrix" values="0 0 0 0 0 0 0 0 0 0 0 0 0 0 0 1 0 0 0 0"/><feComposite in2="SourceGraphic" operator="arithmetic" k1="-22" k2="0" k3="3.2" k4="-0.6"/></filter><filter id="s14" x="-0.1" y="-0.1" width="1.2" height="1.2" color-interpolation-filters="sRGB"><feTurbulence type="fractalNoise" baseFrequency="0.65" numOctaves="2" seed="12"/><feColorMatrix type="matrix" values="0 0 0 0 0 0 0 0 0 0 0 0 0 0 0 1 0 0 0 0"/><feComposite in2="SourceGraphic" operator="arithmetic" k1="9" k2="0" k3="-3.6" k4="-0.6"/></filter><filter id="s15" x="-0.1" y="-0.1" width="1.2" height="1.2" color-interpolation-filters="sRGB"><feTurbulence type="turbulence" baseFrequency="0.3" numOctaves="2" seed="13"/><feColorMatrix type="matrix" values="0 0 0 0 0 0 0 0 0 0 0 0 0 0 0 1 0 0 0 0"/><feComposite in2="SourceGraphic" operator="arithmetic" k1="-14" k2="0" k3="3.8" k4="-0.6"/></filter><filter id="s16" x="-0.1" y="-0.1" width="1.2" height="1.2" color-interpolation-filters="sRGB"><feTurbulence type="fractalNoise" baseFrequency="0.6" numOctaves="2" seed="14"/><feColorMatrix type="matrix" values="0 0 0 0 0 0 0 0 0 0 0 0 0 0 0 1 0 0 0 0"/><feComposite in2="SourceGraphic" operator="arithmetic" k1="8" k2="0" k3="-2.4" k4="-0.6"/></filter><filter id="s17" x="-0.1" y="-0.1" width="1.2" height="1.2" color-interpolation-filters="sRGB"><feTurbulence type="fractalNoise" baseFrequency="0.45 0.8" numOctaves="2" seed="15"/><feColorMatrix type="matrix" values="0 0 0 0 0 0 0 0 0 0 0 0 0 0 0 1 0 0 0 0"/><feComposite in2="SourceGraphic" operator="arithmetic" k1="9" k2="0" k3="-3.6" k4="-0.6"/></filter><filter id="s18" x="-0.1" y="-0.1" width="1.2" height="1.2" color-interpolation-filters="sRGB"><feTurbulence type="turbulence" baseFrequency="0.35" numOctaves="2" seed="16"/><feColorMatrix type="matrix" values="0 0 0 0 0 0 0 0 0 0 0 0 0 0 0 1 0 0 0 0"/><feComposite in2="SourceGraphic" operator="arithmetic" k1="-14" k2="0" k3="4" k4="-0.6"/></filter><filter id="s19" x="-0.1" y="-0.1" width="1.2" height="1.2" color-interpolation-filters="sRGB"><feTurbulence type="fractalNoise" baseFrequency="0.3" numOctaves="2" seed="18"/><feColorMatrix type="matrix" values="0 0 0 0 0 0 0 0 0 0 0 0 0 0 0 1 0 0 0 0"/><feComposite in2="SourceGraphic" operator="arithmetic" k1="8" k2="0" k3="-2.8" k4="-0.6"/></filter><filter id="s20" x="-0.1" y="-0.1" width="1.2" height="1.2" color-interpolation-filters="sRGB"><feTurbulence type="fractalNoise" baseFrequency="0.75" numOctaves="2" seed="19"/><feColorMatrix type="matrix" values="0 0 0 0 0 0 0 0 0 0 0 0 0 0 0 1 0 0 0 0"/><feComposite in2="SourceGraphic" operator="arithmetic" k1="8" k2="0" k3="-2.9" k4="-0.6"/></filter><filter id="s21" x="-0.1" y="-0.1" width="1.2" height="1.2" color-interpolation-filters="sRGB"><feTurbulence type="fractalNoise" baseFrequency="0.95" numOctaves="2" seed="20"/><feColorMatrix type="matrix" values="0 0 0 0 0 0 0 0 0 0 0 0 0 0 0 1 0 0 0 0"/><feComposite in2="SourceGraphic" operator="arithmetic" k1="10" k2="0" k3="-5" k4="-0.6"/></filter><filter id="s22" x="-0.1" y="-0.1" width="1.2" height="1.2" color-interpolation-filters="sRGB"><feTurbulence type="fractalNoise" baseFrequency="0.3" numOctaves="3" seed="21"/><feColorMatrix type="matrix" values="0 0 0 0 0 0 0 0 0 0 0 0 0 0 0 1 0 0 0 0"/><feComposite in2="SourceGraphic" operator="arithmetic" k1="8" k2="0" k3="-3" k4="-0.6"/></filter><filter id="s23" x="-0.1" y="-0.1" width="1.2" height="1.2" color-interpolation-filters="sRGB"><feTurbulence type="fractalNoise" baseFrequency="0.25" numOctaves="4" seed="22"/><feColorMatrix type="matrix" values="0 0 0 0 0 0 0 0 0 0 0 0 0 0 0 1 0 0 0 0"/><feComposite in2="SourceGraphic" operator="arithmetic" k1="7" k2="0" k3="-3.1" k4="-0.6"/></filter><filter id="s24" x="-0.1" y="-0.1" width="1.2" height="1.2" color-interpolation-filters="sRGB"><feTurbulence type="fractalNoise" baseFrequency="0.85" numOctaves="2" seed="23"/><feColorMatrix type="matrix" values="0 0 0 0 0 0 0 0 0 0 0 0 0 0 0 1 0 0 0 0"/><feComposite in2="SourceGraphic" operator="arithmetic" k1="11" k2="0" k3="-6" k4="-0.6"/></filter><filter id="s25" x="-0.1" y="-0.1" width="1.2" height="1.2" color-interpolation-filters="sRGB"><feTurbulence type="fractalNoise" baseFrequency="0.6" numOctaves="2" seed="24"/><feColorMatrix type="matrix" values="0 0 0 0 0 0 0 0 0 0 0 0 0 0 0 1 0 0 0 0"/><feComposite in2="SourceGraphic" operator="arithmetic" k1="5" k2="0" k3="-0.4" k4="-0.6"/></filter><filter id="s26" x="-0.1" y="-0.1" width="1.2" height="1.2" color-interpolation-filters="sRGB"><feTurbulence type="fractalNoise" baseFrequency="0.9" numOctaves="2" seed="25"/><feColorMatrix type="matrix" values="0 0 0 0 0 0 0 0 0 0 0 0 0 0 0 1 0 0 0 0"/><feComposite in2="SourceGraphic" operator="arithmetic" k1="8" k2="0" k3="-2.2" k4="-0.6"/></filter><clipPath id="zc"><rect x="1793" y="896.5" width="30" height="31"/></clipPath><filter id="zb"><feGaussianBlur stdDeviation="1.1"/></filter><filter id="s27" x="-0.1" y="-0.1" width="1.2" height="1.2" color-interpolation-filters="sRGB"><feTurbulence type="fractalNoise" baseFrequency="0.7" numOctaves="2" seed="27"/><feColorMatrix type="matrix" values="0 0 0 0 0 0 0 0 0 0 0 0 0 0 0 1 0 0 0 0"/><feComposite in2="SourceGraphic" operator="arithmetic" k1="3" k2="0" k3="-1.11022e-16" k4="-0.6"/></filter><radialGradient id="g28"><stop offset="0" stop-color="#ffffa0" stop-opacity="1"/><stop offset="0.3" stop-color="#fff050" stop-opacity="1"/><stop offset="0.55" stop-color="#ffc060" stop-opacity="0.95"/><stop offset="0.8" stop-color="#ff9a70" stop-opacity="0.6"/><stop offset="1" stop-color="#ffb090" stop-opacity="0"/></radialGradient><filter id="s29" x="-0.1" y="-0.1" width="1.2" height="1.2" color-interpolation-filters="sRGB"><feTurbulence type="fractalNoise" baseFrequency="0.55" numOctaves="2" seed="29"/><feColorMatrix type="matrix" values="0 0 0 0 0 0 0 0 0 0 0 0 0 0 0 1 0 0 0 0"/><feComposite in2="SourceGraphic" operator="arithmetic" k1="11" k2="0" k3="-5.4" k4="-0.6"/></filter><filter id="s30" x="-0.1" y="-0.1" width="1.2" height="1.2" color-interpolation-filters="sRGB"><feTurbulence type="fractalNoise" baseFrequency="0.95" numOctaves="2" seed="30"/><feColorMatrix type="matrix" values="0 0 0 0 0 0 0 0 0 0 0 0 0 0 0 1 0 0 0 0"/><feComposite in2="SourceGraphic" operator="arithmetic" k1="10" k2="0" k3="-5" k4="-0.6"/></filter><filter id="s31" x="-0.1" y="-0.1" width="1.2" height="1.2" color-interpolation-filters="sRGB"><feTurbulence type="fractalNoise" baseFrequency="0.95" numOctaves="2" seed="31"/><feColorMatrix type="matrix" values="0 0 0 0 0 0 0 0 0 0 0 0 0 0 0 1 0 0 0 0"/><feComposite in2="SourceGraphic" operator="arithmetic" k1="8" k2="0" k3="-3" k4="-0.6"/></filter><clipPath id="gridclip"><rect x="1722.5" y="656.5" width="173.5" height="310"/></clipPath></defs><g clip-path="url(#gridclip)"><path d="M1772.5,672 l3,3 m0,-3 l-3,3" stroke="#222" stroke-width="1"/><polygon points="1790,685 1790,690 1785,690" fill="#7a8cf8"/><rect x="1793.5" y="670" width="29" height="7" fill="#000"/><ellipse cx="1842" cy="673.5" rx="14" ry="5.2" fill="url(#g3)"/><rect x="1861" y="673" width="30" height="1" fill="#000"/><rect x="1820" y="686" width="4" height="4" fill="#8a9cff" opacity="0.8"/><path d="M1819,687.5 h5 M1821.5,685 v5" stroke="#000" stroke-width="1"/><rect x="1854" y="686" width="4" height="4" fill="#8a9cff" opacity="0.8"/><path d="M1853,687.5 h5 M1855.5,685 v5" stroke="#000" stroke-width="1"/><rect x="1888" y="686" width="4" height="4" fill="#8a9cff" opacity="0.8"/><path d="M1887,687.5 h5 M1889.5,685 v5" stroke="#000" stroke-width="1"/><circle cx="1740.5" cy="708.5" r="12.5" fill="url(#g4)"/><circle cx="1774.5" cy="708.5" r="12.5" fill="url(#g5)"/><circle cx="1808.5" cy="708.5" r="13.5" fill="url(#g6)"/><circle cx="1842.5" cy="708.3" r="15.7" fill="#000"/><polygon points="1876.5,694.3 1879.8,703.8 1889.8,704.0 1881.8,710.0 1884.7,719.6 1876.5,713.9 1868.3,719.6 1871.2,710.0 1863.2,704.0 1873.2,703.8" fill="#000"/><rect x="1757.5" y="691.5" width="33" height="33" fill="none" stroke="#000" stroke-width="1"/><rect x="1752" y="720" width="4" height="4" fill="#8a9cff" opacity="0.8"/><path d="M1751,721.5 h5 M1753.5,719 v5" stroke="#000" stroke-width="1"/><rect x="1786" y="720" width="4" height="4" fill="#8a9cff" opacity="0.8"/><path d="M1785,721.5 h5 M1787.5,719 v5" stroke="#000" stroke-width="1"/><rect x="1820" y="720" width="4" height="4" fill="#8a9cff" opacity="0.8"/><path d="M1819,721.5 h5 M1821.5,719 v5" stroke="#000" stroke-width="1"/><rect x="1854" y="720" width="4" height="4" fill="#8a9cff" opacity="0.8"/><path d="M1853,721.5 h5 M1855.5,719 v5" stroke="#000" stroke-width="1"/><rect x="1888" y="720" width="4" height="4" fill="#8a9cff" opacity="0.8"/><path d="M1887,721.5 h5 M1889.5,719 v5" stroke="#000" stroke-width="1"/><ellipse cx="1740" cy="742" rx="12" ry="12" fill="url(#g1)" filter="url(#s7)" opacity="1"/><ellipse cx="1774" cy="742" rx="12" ry="8" fill="url(#g1)" filter="url(#s8)" opacity="1"/><ellipse cx="1808" cy="742" rx="8.5" ry="12" fill="url(#g1)" filter="url(#s9)" opacity="1"/><ellipse cx="1842" cy="742" rx="12" ry="12" fill="url(#g1)" filter="url(#s10)" opacity="0.65"/><ellipse cx="1876" cy="742" rx="14" ry="14" fill="url(#g1)" filter="url(#s11)" opacity="1"/><rect x="1752" y="754" width="4" height="4" fill="#ff7a86" opacity="0.8"/><path d="M1751,755.5 h5 M1753.5,753 v5" stroke="#000" stroke-width="1"/><rect x="1786" y="754" width="4" height="4" fill="#ff7a86" opacity="0.8"/><path d="M1785,755.5 h5 M1787.5,753 v5" stroke="#000" stroke-width="1"/><rect x="1820" y="754" width="4" height="4" fill="#ff7a86" opacity="0.8"/><path d="M1819,755.5 h5 M1821.5,753 v5" stroke="#000" stroke-width="1"/><rect x="1854" y="754" width="4" height="4" fill="#ff7a86" opacity="0.8"/><path d="M1853,755.5 h5 M1855.5,753 v5" stroke="#000" stroke-width="1"/><rect x="1888" y="754" width="4" height="4" fill="#ff7a86" opacity="0.8"/><path d="M1887,755.5 h5 M1889.5,753 v5" stroke="#000" stroke-width="1"/><path d="M1731,763 l2.5,6" stroke="#777" stroke-width="1.6" stroke-linecap="round"/><polygon points="1756,787 1756,792 1751,792" fill="#ff6a76"/><circle cx="1771.7" cy="780.5" r="1.1" fill="#000" opacity="0.44"/><circle cx="1766.3" cy="774.2" r="0.6" fill="#000" opacity="0.70"/><circle cx="1782.3" cy="778.0" r="0.6" fill="#000" opacity="0.45"/><circle cx="1763.5" cy="781.4" r="0.7" fill="#000" opacity="0.53"/><circle cx="1765.2" cy="766.9" r="1.0" fill="#000" opacity="0.64"/><circle cx="1776.8" cy="775.6" r="1.2" fill="#000" opacity="0.57"/><circle cx="1776.8" cy="779.5" r="0.8" fill="#000" opacity="0.89"/><circle cx="1778.2" cy="785.0" r="1.0" fill="#000" opacity="0.62"/><circle cx="1770.9" cy="775.0" r="0.6" fill="#000" opacity="0.52"/><circle cx="1770.4" cy="768.3" r="0.8" fill="#000" opacity="0.75"/><circle cx="1767.2" cy="778.1" r="1.2" fill="#000" opacity="0.82"/><circle cx="1774.4" cy="785.8" r="1.0" fill="#000" opacity="0.93"/><circle cx="1773.1" cy="769.1" r="1.3" fill="#000" opacity="0.47"/><circle cx="1764.2" cy="781.6" r="0.7" fill="#000" opacity="0.69"/><circle cx="1818.3" cy="778.6" r="1.5" fill="#000" opacity="0.79"/><circle cx="1813.2" cy="770.9" r="1.4" fill="#000" opacity="0.80"/><circle cx="1800.3" cy="771.8" r="1.6" fill="#000" opacity="0.97"/><circle cx="1797.5" cy="777.7" r="0.9" fill="#000" opacity="0.85"/><circle cx="1800.2" cy="765.7" r="1.5" fill="#000" opacity="0.64"/><circle cx="1800.0" cy="783.0" r="0.8" fill="#000" opacity="0.73"/><circle cx="1810.2" cy="779.9" r="0.9" fill="#000" opacity="0.88"/><circle cx="1812.4" cy="780.7" r="1.2" fill="#000" opacity="0.94"/><circle cx="1815.6" cy="780.2" r="1.3" fill="#000" opacity="0.94"/><circle cx="1813.1" cy="765.0" r="1.1" fill="#000" opacity="0.71"/><circle cx="1800.3" cy="785.5" r="1.7" fill="#000" opacity="0.58"/><circle cx="1810.8" cy="781.6" r="1.0" fill="#000" opacity="0.74"/><circle cx="1802.4" cy="772.5" r="0.8" fill="#000" opacity="0.71"/><circle cx="1801.3" cy="783.2" r="1.7" fill="#000" opacity="0.85"/><circle cx="1797.8" cy="775.0" r="1.4" fill="#000" opacity="0.53"/><circle cx="1817.3" cy="769.2" r="1.6" fill="#000" opacity="0.90"/><circle cx="1801.6" cy="781.1" r="0.9" fill="#000" opacity="0.82"/><circle cx="1811.1" cy="777.3" r="1.0" fill="#000" opacity="0.58"/><circle cx="1806.4" cy="778.5" r="0.8" fill="#000" opacity="0.58"/><circle cx="1814.3" cy="780.7" r="0.8" fill="#000" opacity="0.94"/><circle cx="1838.2" cy="772.7" r="0.4" fill="#000" opacity="0.87"/><circle cx="1839.0" cy="779.4" r="0.6" fill="#000" opacity="1.00"/><circle cx="1833.2" cy="777.9" r="0.4" fill="#000" opacity="0.82"/><circle cx="1838.3" cy="781.6" r="0.6" fill="#000" opacity="0.83"/><circle cx="1854.5" cy="777.8" r="0.5" fill="#000" opacity="0.83"/><circle cx="1839.9" cy="775.4" r="0.5" fill="#000" opacity="1.00"/><circle cx="1849.1" cy="767.8" r="0.4" fill="#000" opacity="0.87"/><circle cx="1847.7" cy="785.9" r="0.5" fill="#000" opacity="0.96"/><circle cx="1839.1" cy="781.4" r="0.6" fill="#000" opacity="1.00"/><circle cx="1849.0" cy="766.7" r="0.6" fill="#000" opacity="0.95"/><circle cx="1843.4" cy="785.3" r="0.4" fill="#000" opacity="0.81"/><circle cx="1848.8" cy="777.2" r="0.4" fill="#000" opacity="0.94"/><circle cx="1850.4" cy="773.7" r="0.6" fill="#000" opacity="1.00"/><circle cx="1849.5" cy="773.8" r="0.4" fill="#000" opacity="0.85"/><circle cx="1843.9" cy="781.6" r="0.5" fill="#000" opacity="0.98"/><circle cx="1846.8" cy="768.4" r="0.5" fill="#000" opacity="0.96"/><circle cx="1851.1" cy="781.4" r="0.6" fill="#000" opacity="0.96"/><circle cx="1842.0" cy="767.0" r="0.4" fill="#000" opacity="0.96"/><circle cx="1836.2" cy="786.1" r="0.6" fill="#000" opacity="0.88"/><circle cx="1831.7" cy="783.3" r="0.5" fill="#000" opacity="0.83"/><circle cx="1845.5" cy="779.6" r="0.6" fill="#000" opacity="0.96"/><circle cx="1849.2" cy="785.4" r="0.6" fill="#000" opacity="0.93"/><circle cx="1836.3" cy="783.8" r="0.4" fill="#000" opacity="0.80"/><circle cx="1852.3" cy="774.1" r="0.5" fill="#000" opacity="0.99"/><circle cx="1830.9" cy="780.9" r="0.6" fill="#000" opacity="0.84"/><circle cx="1841.9" cy="783.0" r="0.4" fill="#000" opacity="0.92"/><ellipse cx="1876" cy="776" rx="13" ry="13" fill="url(#g1)" filter="url(#s12)" opacity="1"/><path d="M1785,789.5 h5 M1787.5,787 v5" stroke="#000" stroke-width="1"/><path d="M1819,789.5 h5 M1821.5,787 v5" stroke="#000" stroke-width="1"/><path d="M1887,789.5 h5 M1889.5,787 v5" stroke="#000" stroke-width="1"/><ellipse cx="1740" cy="810" rx="14" ry="14" fill="url(#g2)" filter="url(#s13)" opacity="1"/><ellipse cx="1774" cy="810" rx="14" ry="14" fill="url(#g1)" filter="url(#s14)" opacity="1"/><ellipse cx="1808" cy="810" rx="14" ry="14" fill="url(#g2)" filter="url(#s15)" opacity="1"/><ellipse cx="1842" cy="810" rx="14" ry="14" fill="url(#g2)" filter="url(#s16)" opacity="1"/><ellipse cx="1876" cy="810" rx="13" ry="7.5" fill="url(#g2)" filter="url(#s17)" opacity="1"/><path d="M1751,823.5 h5 M1753.5,821 v5" stroke="#000" stroke-width="1"/><rect x="1786" y="822" width="4" height="4" fill="#ff7a86" opacity="0.8"/><path d="M1785,823.5 h5 M1787.5,821 v5" stroke="#000" stroke-width="1"/><rect x="1820" y="822" width="4" height="4" fill="#ff7a86" opacity="0.8"/><path d="M1819,823.5 h5 M1821.5,821 v5" stroke="#000" stroke-width="1"/><rect x="1854" y="822" width="4" height="4" fill="#ff7a86" opacity="0.8"/><path d="M1853,823.5 h5 M1855.5,821 v5" stroke="#000" stroke-width="1"/><path d="M1887,823.5 h5 M1889.5,821 v5" stroke="#000" stroke-width="1"/><ellipse cx="1740" cy="844" rx="12.5" ry="8.5" fill="url(#g2)" filter="url(#s18)" opacity="1"/><path d="M1772.4,835.9 l2.2,2.3" stroke="#777" stroke-width="1.8" stroke-linecap="round" opacity="0.8"/><path d="M1771.1,843.1 l-3.1,0.9" stroke="#777" stroke-width="1.8" stroke-linecap="round" opacity="0.8"/><path d="M1782.1,842.3 l-0.8,3.1" stroke="#777" stroke-width="1.8" stroke-linecap="round" opacity="0.8"/><path d="M1774.0,844.7 l-3.1,0.8" stroke="#777" stroke-width="1.8" stroke-linecap="round" opacity="0.8"/><path d="M1764.4,842.7 l-0.2,3.2" stroke="#777" stroke-width="1.8" stroke-linecap="round" opacity="0.8"/><path d="M1764.1,850.6 l2.7,1.7" stroke="#777" stroke-width="1.8" stroke-linecap="round" opacity="0.8"/><path d="M1773.5,849.0 l2.7,1.6" stroke="#777" stroke-width="1.8" stroke-linecap="round" opacity="0.8"/><path d="M1770.5,844.4 l-0.6,3.1" stroke="#777" stroke-width="1.8" stroke-linecap="round" opacity="0.8"/><path d="M1779.7,835.3 l-0.6,3.2" stroke="#777" stroke-width="1.8" stroke-linecap="round" opacity="0.8"/><ellipse cx="1808" cy="844" rx="12" ry="12" fill="url(#g1)" filter="url(#s19)" opacity="0.85"/><ellipse cx="1842" cy="844" rx="14" ry="14" fill="url(#g2)" filter="url(#s20)" opacity="1"/><ellipse cx="1876" cy="844" rx="15" ry="15" fill="url(#g2)" filter="url(#s21)" opacity="1"/><path d="M1751,857.5 h5 M1753.5,855 v5" stroke="#000" stroke-width="1"/><path d="M1785,857.5 h5 M1787.5,855 v5" stroke="#000" stroke-width="1"/><path d="M1819,857.5 h5 M1821.5,855 v5" stroke="#000" stroke-width="1"/><path d="M1853,857.5 h5 M1855.5,855 v5" stroke="#000" stroke-width="1"/><rect x="1888" y="856" width="4" height="4" fill="#ff7a86" opacity="0.8"/><path d="M1887,857.5 h5 M1889.5,855 v5" stroke="#000" stroke-width="1"/><ellipse cx="1740" cy="878" rx="12.5" ry="12.5" fill="url(#g2)" filter="url(#s22)" opacity="1"/><ellipse cx="1774" cy="878" rx="14" ry="14" fill="url(#g1)" filter="url(#s23)" opacity="0.75"/><ellipse cx="1808" cy="878" rx="12" ry="12" fill="url(#g2)" filter="url(#s24)" opacity="1"/><ellipse cx="1842" cy="878" rx="3" ry="9.5" fill="url(#g1)" filter="url(#s25)" opacity="0.8"/><ellipse cx="1876" cy="878" rx="2.2" ry="9.5" fill="url(#g1)" filter="url(#s26)" opacity="1"/><path d="M1751,891.5 h5 M1753.5,889 v5" stroke="#000" stroke-width="1"/><path d="M1785,891.5 h5 M1787.5,889 v5" stroke="#000" stroke-width="1"/><path d="M1819,891.5 h5 M1821.5,889 v5" stroke="#000" stroke-width="1"/><rect x="1854" y="890" width="4" height="4" fill="#ff7a86" opacity="0.8"/><path d="M1853,891.5 h5 M1855.5,889 v5" stroke="#000" stroke-width="1"/><rect x="1888" y="890" width="4" height="4" fill="#ff7a86" opacity="0.8"/><path d="M1887,891.5 h5 M1889.5,889 v5" stroke="#000" stroke-width="1"/><path d="M1727.0,910.0 l17,15" stroke="#111" stroke-width="0.9"/><path d="M1729.6,907.6 l17,15" stroke="#111" stroke-width="0.9"/><path d="M1732.2,905.2 l17,15" stroke="#111" stroke-width="0.9"/><path d="M1734.8,902.8 l17,15" stroke="#111" stroke-width="0.9"/><path d="M1737.4,900.4 l17,15" stroke="#111" stroke-width="0.9"/><rect x="1772" y="911" width="1" height="1" fill="#333"/><g clip-path="url(#zc)"><rect x="1793" y="896.5" width="30" height="31" fill="#e4e4e4"/><g filter="url(#zb)" stroke="#666" stroke-width="3.2" fill="none" opacity="0.9"><path d="M1791,898 c8,-2 14,6 34,8"/><path d="M1791,906 c8,-2 14,6 34,2"/><path d="M1791,914 c8,-2 14,6 34,-4"/><path d="M1791,922 c8,-2 14,6 34,-10"/><path d="M1791,930 c8,-2 14,6 34,-16"/></g></g><ellipse cx="1842" cy="912" rx="13.5" ry="13.5" fill="url(#g1)" filter="url(#s27)" opacity="0.75"/><circle cx="1876.5" cy="912.5" r="13.5" fill="url(#g28)"/><path d="M1751,925.5 h5 M1753.5,923 v5" stroke="#000" stroke-width="1"/><path d="M1819,925.5 h5 M1821.5,923 v5" stroke="#000" stroke-width="1"/><path d="M1853,925.5 h5 M1855.5,923 v5" stroke="#000" stroke-width="1"/><rect x="1888" y="924" width="4" height="4" fill="#ff7a86" opacity="0.8"/><path d="M1887,925.5 h5 M1889.5,923 v5" stroke="#000" stroke-width="1"/><circle cx="1734.0" cy="943.6" r="0.6" fill="#000" opacity="0.95"/><circle cx="1730.3" cy="945.5" r="0.9" fill="#000" opacity="0.98"/><circle cx="1730.5" cy="949.6" r="0.7" fill="#000" opacity="0.90"/><circle cx="1736.9" cy="937.8" r="0.7" fill="#000" opacity="0.90"/><circle cx="1750.1" cy="942.1" r="0.9" fill="#000" opacity="0.99"/><circle cx="1739.4" cy="955.7" r="1.0" fill="#000" opacity="0.97"/><circle cx="1743.0" cy="949.4" r="0.7" fill="#000" opacity="0.81"/><circle cx="1740.2" cy="949.5" r="0.8" fill="#000" opacity="0.96"/><circle cx="1744.1" cy="942.9" r="0.8" fill="#000" opacity="0.93"/><circle cx="1747.6" cy="955.6" r="1.0" fill="#000" opacity="0.84"/><circle cx="1747.8" cy="943.6" r="0.7" fill="#000" opacity="1.00"/><circle cx="1742.6" cy="941.5" r="0.7" fill="#000" opacity="0.90"/><circle cx="1736.9" cy="950.9" r="0.6" fill="#000" opacity="0.94"/><circle cx="1749.6" cy="947.2" r="0.7" fill="#000" opacity="0.80"/><circle cx="1735.0" cy="955.0" r="0.7" fill="#000" opacity="0.81"/><circle cx="1751.5" cy="944.9" r="1.0" fill="#000" opacity="0.82"/><circle cx="1739.7" cy="948.6" r="0.9" fill="#000" opacity="0.85"/><circle cx="1745.8" cy="952.1" r="0.9" fill="#000" opacity="0.96"/><circle cx="1739.7" cy="951.0" r="1.0" fill="#000" opacity="0.91"/><circle cx="1738.8" cy="942.3" r="0.4" fill="#000" opacity="0.94"/><circle cx="1736.9" cy="947.6" r="1.0" fill="#000" opacity="0.93"/><circle cx="1741.2" cy="942.4" r="0.9" fill="#000" opacity="0.81"/><ellipse cx="1774" cy="946" rx="12" ry="12" fill="url(#g1)" filter="url(#s29)" opacity="1"/><ellipse cx="1808" cy="946" rx="15" ry="15" fill="url(#g2)" filter="url(#s30)" opacity="1"/><ellipse cx="1842" cy="946" rx="14" ry="14" fill="url(#g1)" filter="url(#s31)" opacity="1"/><path d="M1866.3,938.0 q10.0,-1.2 19.4,0.7" stroke="#111" stroke-width="1" fill="none"/><path d="M1866.6,940.2 q10.0,-1.9 17.9,0.6" stroke="#111" stroke-width="1" fill="none"/><path d="M1863.2,942.4 q10.0,-2.6 18.1,-0.8" stroke="#111" stroke-width="1" fill="none"/><path d="M1863.0,944.6 q10.0,-1.8 19.1,1.3" stroke="#111" stroke-width="1" fill="none"/><path d="M1863.4,946.8 q10.0,-1.0 18.2,0.0" stroke="#111" stroke-width="1" fill="none"/><path d="M1862.1,949.0 q10.0,-2.0 17.1,1.2" stroke="#111" stroke-width="1" fill="none"/><path d="M1864.8,951.2 q10.0,-2.2 20.3,1.8" stroke="#111" stroke-width="1" fill="none"/><rect x="1752" y="958" width="4" height="4" fill="#ff7a86" opacity="0.8"/><path d="M1751,959.5 h5 M1753.5,957 v5" stroke="#000" stroke-width="1"/><rect x="1786" y="958" width="4" height="4" fill="#ff7a86" opacity="0.8"/><path d="M1785,959.5 h5 M1787.5,957 v5" stroke="#000" stroke-width="1"/><path d="M1819,959.5 h5 M1821.5,957 v5" stroke="#000" stroke-width="1"/><path d="M1853,959.5 h5 M1855.5,957 v5" stroke="#000" stroke-width="1"/><path d="M1887,959.5 h5 M1889.5,957 v5" stroke="#000" stroke-width="1"/></g></svg>
<div style="left:36px;top:240px;width:35px;height:31px;background:#cce4f7;border:1px solid #99cdf5;"></div>
<svg style="left:0;top:0" width="1" height="1"><defs>
<linearGradient id="tb" x1="0" y1="0" x2="1" y2="1"><stop offset="0" stop-color="#7da2d6"/><stop offset="1" stop-color="#2f5fa6"/></linearGradient>
<linearGradient id="tg" x1="0" y1="0" x2="1" y2="0"><stop offset="0" stop-color="#3a3a3a"/><stop offset="1" stop-color="#f4f4f4"/></linearGradient>
<radialGradient id="tglow"><stop offset="0" stop-color="#fffff0"/><stop offset="0.4" stop-color="#fff060" stop-opacity="0.9"/><stop offset="1" stop-color="#ffe000" stop-opacity="0"/></radialGradient>
<radialGradient id="tsh"><stop offset="0" stop-color="#000" stop-opacity="0.28"/><stop offset="1" stop-color="#000" stop-opacity="0"/></radialGradient>
<linearGradient id="tglass" x1="0" y1="0" x2="0" y2="1"><stop offset="0" stop-color="#d6e6f8"/><stop offset="1" stop-color="#8db2e0"/></linearGradient>
</defs></svg>
<svg style="left:6.3px;top:83.7px" width="24" height="24" viewBox="0 0 24 24"><rect x="3.5" y="6" width="17" height="12" fill="#d2d4d2"/><rect x="3.5" y="6" width="17" height="12" fill="none" stroke="#000" stroke-width="1.4" stroke-dasharray="1.5 1.3"/></svg>
<svg style="left:40.4px;top:83.7px" width="24" height="24" viewBox="0 0 24 24"><ellipse cx="12" cy="12" rx="9.3" ry="7" fill="#d2d4d2"/><ellipse cx="12" cy="12" rx="9.3" ry="7" fill="none" stroke="#000" stroke-width="1.3" stroke-dasharray="1.2 1.3"/></svg>
<svg style="left:75.9px;top:83.7px" width="24" height="24" viewBox="0 0 24 24"><ellipse cx="13" cy="21.5" rx="9" ry="2" fill="url(#tsh)"/><ellipse cx="13" cy="10.5" rx="8" ry="4.6" fill="none" stroke="#8a8a8a" stroke-width="2.6" transform="rotate(-12 13 10.5)"/><ellipse cx="13" cy="10.5" rx="8" ry="4.6" fill="none" stroke="#e4e4e4" stroke-width="0.9" transform="rotate(-12 13 10.5)"/><path d="M6,13 C5,16 8,15 7,19" stroke="#8a8a8a" stroke-width="2.4" fill="none"/><path d="M6,13 C5,16 8,15 7,19" stroke="#e0e0e0" stroke-width="0.8" fill="none"/></svg>
<svg style="left:110.9px;top:83.7px" width="24" height="24" viewBox="0 0 24 24"><ellipse cx="15" cy="20" rx="7" ry="1.6" fill="url(#tsh)"/><path d="M9,9 L19.5,18.5" stroke="#777" stroke-width="3" stroke-linecap="round"/><path d="M9.5,9 L19.5,18" stroke="#d8d8d0" stroke-width="1.1" stroke-linecap="round"/><circle cx="8" cy="8" r="5.5" fill="url(#tglow)"/><circle cx="8" cy="8" r="1.6" fill="#fff"/></svg>
<svg style="left:145.9px;top:83.7px" width="24" height="24" viewBox="0 0 24 24"><rect x="14.5" y="2" width="6.5" height="6.5" fill="#5b86c7" stroke="#2a4e8e"/><rect x="16.3" y="3.8" width="3" height="3" fill="none" stroke="#c8daf2" stroke-width="0.8"/><rect x="14.5" y="8.7" width="6.5" height="6" fill="#e02020" stroke="#a00"/><rect x="14.5" y="15" width="6.5" height="6.5" fill="#66c830" stroke="#3a8a10"/><rect x="2.5" y="6" width="3.5" height="5.5" fill="#fff" stroke="#777" stroke-width="0.8"/><path d="M6,6.5 L10.5,5.5 L15,10.5 L14,13.5 L10.5,14.5 L6,10.5 Z" fill="#f59a23" stroke="#d0700a" stroke-width="0.8"/><path d="M8,8 l4,4 M10,7 l4,4" stroke="#ffd9a0" stroke-width="0.8"/></svg>
<svg style="left:6.3px;top:116px" width="24" height="24" viewBox="0 0 24 24"><path d="M7,4 L11,14 L13,14 L9.5,3.5 Z" fill="#ddd" stroke="#777" stroke-width="0.8"/><path d="M17,4 L13,14 L11,14 L14.5,3.5 Z" fill="#eee" stroke="#777" stroke-width="0.8"/><circle cx="7.5" cy="18.5" r="2.8" fill="none" stroke="#2f5fa6" stroke-width="2"/><circle cx="16.5" cy="18.5" r="2.8" fill="none" stroke="#2f5fa6" stroke-width="2"/><path d="M9,16 L11.5,13.5 M15,16 L12.5,13.5" stroke="#2f5fa6" stroke-width="1.6"/><path d="M12,10 C12,4 14,2.5 22,2.5" stroke="#f08a1a" stroke-width="1.1" fill="none" stroke-dasharray="1.3 1"/></svg>
<svg style="left:40.4px;top:116px" width="24" height="24" viewBox="0 0 24 24"><path d="M12,11 h8 v3 c2,0 2.5,2 2,5 h-10 Z" fill="#fcfcfc" stroke="#c8c8c8" stroke-width="0.9"/><rect x="3.5" y="10.5" width="11.5" height="8" fill="#3b66b0" stroke="#5a2a6a" stroke-width="0.9" stroke-dasharray="1.2 0.8"/><path d="M7,11 L9.3,14.5 L11.5,11 Z" fill="#e8eefc"/><circle cx="9.3" cy="6.5" r="3.7" fill="#f08a2a" stroke="#b8501a" stroke-width="0.9" stroke-dasharray="1.2 0.8"/><circle cx="8.5" cy="5.5" r="1.3" fill="#ffc890"/></svg>
<svg style="left:75.9px;top:116px" width="24" height="24" viewBox="0 0 24 24"><path d="M4.5,2.5 V20.5" stroke="#fff" stroke-width="3.4"/><path d="M2.8,2.5 V20.5 M6.2,2.5 V20.5 M2.8,2.5 H6.2 M2.8,20.5 H6.2" stroke="#555" stroke-width="0.8" stroke-dasharray="2 1.4" fill="none"/><rect x="3.6" y="8" width="1.8" height="1.8" fill="#333"/><rect x="3.6" y="14" width="1.8" height="1.8" fill="#333"/><path d="M6,9 C7,3 12,1.5 15.5,6" stroke="#999" stroke-width="1.6" fill="none"/><path d="M6,9 C7,3 12,1.5 15.5,6" stroke="#f4f4f4" stroke-width="0.6" fill="none"/><path d="M15.5,5.5 C19,8 19.5,11 17.5,15 H13.5 C11.5,11 12,8 15.5,5.5 Z" fill="#f6dc50" stroke="#9a7a0a" stroke-width="0.9"/><path d="M15.5,7 V13" stroke="#333" stroke-width="0.9"/><circle cx="15.5" cy="10.5" r="0.9" fill="#333"/><rect x="13.3" y="15" width="4.4" height="6" fill="#3b66b0" stroke="#1f3f7a" stroke-width="0.9"/></svg>
<svg style="left:110.9px;top:116px" width="24" height="24" viewBox="0 0 24 24"><ellipse cx="13" cy="21.5" rx="9" ry="2" fill="url(#tsh)"/><path d="M5,17 L14,7 L17,10 L8,19 Q6,20 5,17 Z" fill="#4a78bc" stroke="#1f3a6a" stroke-width="0.9"/><path d="M7,16.5 L14,9" stroke="#e8f0fc" stroke-width="1.3"/><path d="M13,5.5 L18.5,11" stroke="#111" stroke-width="2.6" stroke-linecap="round"/><path d="M15.5,8 L18,4.5 Q20.5,2 21.5,4 Q22,6 19,8.5 Z" fill="#1a2a4a" stroke="#0a1020" stroke-width="0.8"/><path d="M4.5,17.5 C2.5,20 3,22 4.8,22 C6.5,22 6.5,20 4.5,17.5 Z" fill="#3b66b0" stroke="#1f3f7a" stroke-width="0.6"/></svg>
<svg style="left:145.9px;top:116px" width="24" height="24" viewBox="0 0 24 24"><ellipse cx="14" cy="21" rx="8" ry="1.6" fill="url(#tsh)"/><path d="M14.5,14.5 L21,21" stroke="#666" stroke-width="3.2" stroke-linecap="round"/><path d="M16.5,16.5 L20.8,20.8" stroke="#bbb" stroke-width="1.2" stroke-linecap="round" stroke-dasharray="1 0.8"/><circle cx="10" cy="9.5" r="8" fill="url(#tglass)" stroke="#8a8a8a" stroke-width="1.5"/><path d="M3.5,9 A6.5,6.5 0 0 1 16.5,9 Q10,6.5 3.5,9 Z" fill="#eef5fd" opacity="0.85"/></svg>
<svg style="left:6.3px;top:147.6px" width="24" height="24" viewBox="0 0 24 24"><ellipse cx="13" cy="21.5" rx="9" ry="2" fill="url(#tsh)"/><rect x="10" y="1" width="4" height="4" fill="#dcdcdc" stroke="#555" stroke-width="0.8"/><path d="M12,5 C8,8 5,13 5.5,21 C8,17 9.5,13 12,11 C14.5,13 16,17 18.5,21 C19,13 16,8 12,5 Z" fill="#6a90cc" stroke="#2a4a8a" stroke-width="0.9"/><circle cx="12" cy="8" r="2.2" fill="#bbb" stroke="#444" stroke-width="0.8"/><rect x="10.5" y="12.5" width="3" height="4" fill="#ddd" stroke="#555" stroke-width="0.7"/><path d="M3,15 L21,15" stroke="#333" stroke-width="0.7"/><path d="M18.5,21 l0,2" stroke="#777" stroke-width="1.4"/></svg>
<svg style="left:40.4px;top:147.6px" width="24" height="24" viewBox="0 0 24 24"><g transform="translate(12 12) scale(0.87) translate(-12 -12)"><ellipse cx="12" cy="21.5" rx="7" ry="1.5" fill="url(#tsh)"/><path d="M12,1.5 L16,6 H13.6 V10.4 H18 V8 L22.5,12 L18,16 V13.6 H13.6 V18 H16 L12,22.5 L8,18 H10.4 V13.6 H6 V16 L1.5,12 L6,8 V10.4 H10.4 V6 H8 Z" fill="#4f7dc2" stroke="#2a4e8e" stroke-width="0.9"/><path d="M12,3.2 L14,5.3 M6,9.5 L3.5,12" stroke="#b4ccee" stroke-width="0.8"/></g></svg>
<svg style="left:75.9px;top:147.6px" width="24" height="24" viewBox="0 0 24 24"><rect x="7.5" y="7.5" width="9" height="8" fill="#f0f0f0" stroke="#aaa" stroke-width="0.9"/><path d="M12,1 V6 M12,17.5 V22.5 M1,11.5 H6 M18,11.5 H23" stroke="#000" stroke-width="1.1"/><path d="M12,0.5 l-2,2.6 h4 Z M12,23 l-2,-2.6 h4 Z M0.5,11.5 l2.6,-2 v4 Z M23.500,11.5 l-2.6,-2 v4 Z" fill="#000"/></svg>
<svg style="left:110.9px;top:147.6px" width="24" height="24" viewBox="0 0 24 24"><ellipse cx="13" cy="21.5" rx="9" ry="2" fill="url(#tsh)"/><path d="M3,21 L8,12 L13,17 Z" fill="#f4f4f4" stroke="#666" stroke-width="0.8"/><path d="M8,12 L11,9 L15.5,13.5 L13,17 Z" fill="#bdbdbd" stroke="#666" stroke-width="0.8"/><path d="M11,9 L16,2.5 M15.5,13.500 L20,6" stroke="#999" stroke-width="1"/><path d="M11.5,9 L16.5,3 L20,6.500 L15.500,13 Z" fill="#ececec" stroke="#999" stroke-width="0.7"/><path d="M14,8 L17.500,4.500" stroke="#777" stroke-width="1.1"/></svg>
<svg style="left:145.9px;top:147.6px" width="24" height="24" viewBox="0 0 24 24"><ellipse cx="13" cy="21.5" rx="9" ry="2" fill="url(#tsh)"/><rect x="5" y="2.500" width="11" height="9" fill="url(#tb)" stroke="#2a4e8e" stroke-width="0.9"/><rect x="9" y="7" width="11" height="9.500" fill="url(#tb)" stroke="#2a4e8e" stroke-width="0.9" transform="rotate(38 14.500 11.700)"/><path d="M18,4 C20.500,3.500 22,5.500 21,7.500 l1.500,0.500 l-3,1.500 l-1,-3 l1.300,0.500 C20,6 19.500,5.200 18,5.200 Z" fill="#fff" stroke="#2a4e8e" stroke-width="0.7"/><path d="M6,20 C3.500,20.500 2,18.500 3,16.500 l-1.500,-0.500 l3,-1.500 l1,3 l-1.300,-0.500 C4,18 4.500,18.800 6,18.800 Z" fill="#fff" stroke="#2a4e8e" stroke-width="0.7"/></svg>
<svg style="left:6.3px;top:179.7px" width="24" height="24" viewBox="0 0 24 24"><rect x="5.500" y="6.500" width="16" height="14.500" fill="url(#tb)" stroke="#2a4e8e"/><rect x="1.500" y="2.500" width="15" height="13" fill="none" stroke="#2a4e8e" stroke-width="0.9" stroke-dasharray="1.200 1.200"/><rect x="1.500" y="2.500" width="5" height="5" fill="#9ab6e0" stroke="#2a4e8e" stroke-width="0.9"/><path d="M5,6 L17,18" stroke="#fff" stroke-width="1.800"/><path d="M18.500,19.500 L13.500,18 L17,14.500 Z" fill="#fff"/></svg>
<svg style="left:40.4px;top:179.7px" width="24" height="24" viewBox="0 0 24 24"><ellipse cx="13" cy="21.5" rx="9" ry="2" fill="url(#tsh)"/><path d="M5.800,4.700 H17.700 L21.400,17.500 H5.800 Z" fill="url(#tb)" stroke="#2a4e8e" stroke-width="0.900"/><path d="M8,5.800 H16.800 L20,16.400 H10.800 Z" fill="#8fb0e0" fill-opacity="0.350" stroke="#b4ccee" stroke-width="0.700"/><path d="M3.300,18.700 h4 v-2.200 l3.800,3.300 l-3.800,3.300 v-2.200 h-4 Z" fill="#fff" stroke="#2a4e8e" stroke-width="0.800"/></svg>
<svg style="left:75.9px;top:179.7px" width="24" height="24" viewBox="0 0 24 24"><ellipse cx="13" cy="21.5" rx="9" ry="2" fill="url(#tsh)"/><path d="M8,2.500 H16 L21,18 H3 Z" fill="url(#tb)" stroke="#2a4e8e" stroke-width="0.900"/><path d="M9,4 H15 L19.500,17" fill="none" stroke="#a9c2e8" stroke-width="0.800"/><path d="M3,17 H9 V22 H3 Z M15,17 H21 V22 H15 Z" fill="#3b66b0" stroke="#2a4e8e" stroke-width="0.700"/><path d="M4,21 l3.500,-3 M4,21 v-2.400 M4,21 h2.400 M20,21 l-3.500,-3 M20,21 v-2.400 M20,21 h-2.400" stroke="#fff" stroke-width="1" fill="none"/></svg>
<svg style="left:110.9px;top:179.7px" width="24" height="24" viewBox="0 0 24 24"><path d="M2,4 L15,4 L15,20 L2,18 Z" fill="#3e6db8" stroke="#2a4e8e" stroke-width="0.900"/><path d="M15,4 L21.500,1.500 L21.500,22 L15,20 Z" fill="#6d95d2" stroke="#2a4e8e" stroke-width="0.900"/><path d="M4,11.500 l4,-3.500 v2.200 h7 v-2.200 l4,3.500 l-4,3.500 v-2.200 h-7 v2.200 Z" fill="#fff"/></svg>
<svg style="left:145.9px;top:179.7px" width="24" height="24" viewBox="0 0 24 24"><path d="M5.500,3.500 L19.500,7 L18,20 L4.500,16.500 Z M5.500,3.500 L12,11.500 L18,20 M19.500,7 L12,11.500 L4.500,16.500" stroke="#999" stroke-width="1.600" fill="none"/><g fill="#4f7dc2" stroke="#2a4e8e" stroke-width="0.900"><circle cx="5.500" cy="3.500" r="2.900"/><circle cx="19.500" cy="7" r="2.900"/><circle cx="12" cy="11.500" r="2.900"/><circle cx="4.500" cy="16.500" r="2.900"/><circle cx="18" cy="20" r="2.900"/></g></svg>
<svg style="left:6.3px;top:211.6px" width="24" height="24" viewBox="0 0 24 24"><ellipse cx="12" cy="21.300" rx="10" ry="1.500" fill="url(#tsh)"/><text x="10.4" y="21.300" font-family="Liberation Sans,sans-serif" font-weight="bold" font-size="27.500" text-anchor="middle" fill="#1a1a1a" stroke="#1a1a1a" stroke-width="0.900" transform="scale(1.130 1)">A</text></svg>
<svg style="left:40.4px;top:211.6px" width="24" height="24" viewBox="0 0 24 24"><ellipse cx="13" cy="21.5" rx="9" ry="2" fill="url(#tsh)"/><path d="M2.500,17 V9.500 C2.500,8 4,7.500 5,8 L8,8" stroke="#5a86c8" stroke-width="2.400" fill="none"/><path d="M6,9 L16,4 L22,15.500 L11,21.500 Z" fill="#f4f4f4" stroke="#8a8a8a" stroke-width="0.900"/><path d="M6,9 L16,4 L17.500,7 L7.500,12 Z" fill="#dcdcdc"/><circle cx="13.500" cy="11" r="2" fill="#bbb" stroke="#777" stroke-width="0.800"/><path d="M13.500,10 C13,4.500 17,1 18.500,5" stroke="#999" stroke-width="1.200" fill="none"/></svg>
<svg style="left:75.9px;top:211.6px" width="24" height="24" viewBox="0 0 24 24"><ellipse cx="12" cy="21.800" rx="10" ry="1.500" fill="url(#tsh)"/><rect x="3.800" y="4" width="17" height="16.500" fill="url(#tg)" stroke="#7a7a7a" stroke-width="1.200"/></svg>
<svg style="left:110.9px;top:211.6px" width="24" height="24" viewBox="0 0 24 24"><ellipse cx="13" cy="21.5" rx="9" ry="2" fill="url(#tsh)"/><path d="M3.500,21 L5,15.500 L17,2.500 L21.500,6.500 L9,19 Z" fill="#e9a03a" stroke="#8a5a10" stroke-width="0.900"/><path d="M6,15.500 L17.500,3.500" stroke="#f8d08a" stroke-width="1.400"/><path d="M17,2.500 Q19.500,0.500 21,2 Q23,4 21.500,6.500 Z" fill="#e84a4a" stroke="#a01a1a" stroke-width="0.700"/><path d="M3.500,21 L5,15.500 L9,19 Z" fill="#f2d6a8" stroke="#8a5a10" stroke-width="0.700"/><path d="M3.500,21 L4.200,18.400 L6,20 Z" fill="#333"/></svg>
<svg style="left:145.9px;top:211.6px" width="24" height="24" viewBox="0 0 24 24"><ellipse cx="13" cy="21.5" rx="9" ry="2" fill="url(#tsh)"/><path d="M20,1.500 Q22,2 21,4.500 L13,15 L10.500,13 Z" fill="#b06a2a" stroke="#6a3a0a" stroke-width="0.800"/><path d="M19.500,3 L12,13" stroke="#e0a060" stroke-width="0.900"/><path d="M10.500,13 L13,15 L11,17.500 L8.500,15.500 Z" fill="#cfcfcf" stroke="#666" stroke-width="0.800"/><path d="M8.500,15.500 L11,17.500 C9,21 6,21.500 2.500,22 C5,20 6,17.500 8.500,15.500 Z" fill="#111"/></svg>
<svg style="left:6.3px;top:243.8px" width="24" height="24" viewBox="0 0 24 24"><path d="M6,7 L20,5.500 Q22,5.500 21.500,7.500 L19,15.500 Q18.500,17 16.500,17.500 L4,19 Q2,19 2.500,17 L4.500,9 Q5,7.200 6,7 Z" fill="#f4a0a0" stroke="#e8282a" stroke-width="1.300"/><path d="M4.500,12.500 L20,10.500 L21,7" fill="none" stroke="#fbd4d4" stroke-width="0.900"/><path d="M4.300,13.500 L19.500,11.500 L18.500,16 L4,18 Z" fill="#ee8a8a"/></svg>
<svg style="left:40.4px;top:243.8px" width="24" height="24" viewBox="0 0 24 24"><path d="M9,14 L18,4.500" stroke="#222" stroke-width="3.400" stroke-linecap="round"/><path d="M10,12.500 L17.500,4.800" stroke="#777" stroke-width="0.900"/><path d="M6,17.500 L9.500,13.500" stroke="#999" stroke-width="1.600"/><path d="M12.500,11 C14.500,13 13,16 15.500,17.500 C17.500,18.500 19,16.500 20.500,15" stroke="#666" stroke-width="1.600" fill="none"/><path d="M12.500,11 C14.500,13 13,16 15.500,17.500 C17.500,18.500 19,16.500 20.500,15" stroke="#ddd" stroke-width="0.500" fill="none"/><path d="M13,8.500 l2.500,3" stroke="#333" stroke-width="1.600"/><path d="M5.500,18 L2.500,21.500" stroke="#5a86d8" stroke-width="1.800" stroke-linecap="round" opacity="0.700"/><circle cx="3" cy="21" r="1.800" fill="#7aa2e8" opacity="0.450"/></svg>
<svg style="left:75.9px;top:243.8px" width="24" height="24" viewBox="0 0 24 24"><ellipse cx="13" cy="21.5" rx="9" ry="2" fill="url(#tsh)"/><rect x="6" y="2.500" width="7.500" height="4.500" rx="1.200" fill="#444" stroke="#222" stroke-width="0.800"/><path d="M4,9.500 Q4,7 6.500,7 H13 Q15.500,7 15.500,9.500 V17 Q15.500,19 13,19 H6.500 Q4,19 4,17 Z" fill="#2f57a0" stroke="#222e4a" stroke-width="0.900"/><path d="M5.500,9 H14 V12.500 H5.500 Z" fill="#a8bede"/><path d="M5,10.500 H15" stroke="#e8eefa" stroke-width="0.800"/><path d="M17,17.500 l2,-1.500 l0.500,1.500 l2.500,-0.500 l-2,1.500 l1.500,2.500 l-2.500,-1.500 l-1.500,2 l-0.200,-2.500 l-2.500,0 Z" fill="#2f57a0"/><circle cx="22" cy="14.500" r="0.700" fill="#2f57a0"/><circle cx="15.500" cy="22" r="0.700" fill="#2f57a0"/></svg>
<svg style="left:110.9px;top:243.8px" width="24" height="24" viewBox="0 0 24 24"><ellipse cx="13" cy="21.5" rx="9" ry="2" fill="url(#tsh)"/><g transform="translate(12 12.5) scale(0.86) translate(-12 -12)"><circle cx="12" cy="5" r="3" fill="#f4e8cc" stroke="#9a6a1a" stroke-width="0.900"/><path d="M10.500,7.500 L10,12 H14 L13.500,7.500 Z" fill="#f0dcb0" stroke="#9a6a1a" stroke-width="0.800"/><path d="M5,12 H19 Q20,12 20,13 V19 H4 V13 Q4,12 5,12 Z" fill="#ecd49a" stroke="#9a6a1a" stroke-width="0.900"/><rect x="4" y="16" width="16" height="1.400" fill="#222"/><path d="M10,14 h4 l-2,2 Z" fill="#222"/></g></svg>
<svg style="left:145.9px;top:243.8px" width="24" height="24" viewBox="0 0 24 24"><g stroke="#a88a00" stroke-width="0.900" fill="#dcc020"><rect x="-3.800" y="-11" width="7.600" height="22" rx="3.800" transform="translate(12 12) rotate(45)"/><rect x="-3.800" y="-11" width="7.600" height="22" rx="3.800" transform="translate(12 12) rotate(-45)"/></g><rect x="-3.300" y="-3.300" width="6.600" height="6.600" fill="#e8d448" stroke="#b89a00" stroke-width="0.500" transform="translate(12 12) rotate(45)"/><path d="M5,6 l3,3 M19,6 l-3,3 M5,18 l3,-3 M19,18 l-3,-3" stroke="#f8ec90" stroke-width="1.100"/></svg>
<svg style="left:6.3px;top:276.3px" width="24" height="24" viewBox="0 0 24 24"><path d="M4,8 L21,6 L22,19 L6,22.500 Z" fill="#4f7dc2" stroke="#2a4e8e" stroke-width="0.900"/><path d="M5.500,9.500 L20,7.500" stroke="#a9c2e8" stroke-width="0.800"/><circle cx="8" cy="4" r="2.700" fill="#f4e8cc" stroke="#9a6a1a" stroke-width="0.900"/><path d="M6.800,6.300 L6.500,9.500 H9.500 L9.200,6.300 Z" fill="#f0dcb0" stroke="#9a6a1a" stroke-width="0.700"/><path d="M3,9.500 H13 Q14,9.500 14,10.500 V15 H2 V10.500 Q2,9.500 3,9.500 Z" fill="#ecd49a" stroke="#9a6a1a" stroke-width="0.900"/><rect x="2" y="12.800" width="12" height="1.300" fill="#222"/></svg>
<svg style="left:40.4px;top:276.3px" width="24" height="24" viewBox="0 0 24 24"><g transform="translate(12 12.5) scale(0.82) translate(-12 -12)"><ellipse cx="12" cy="21" rx="6" ry="1.500" fill="url(#tsh)"/><path d="M12,3 C12,7 5.500,11.500 5.500,15.500 C5.500,19 8.500,21 12,21 C15.500,21 18.500,19 18.500,15.500 C18.500,11.500 12,7 12,3 Z" fill="url(#tglass)" stroke="#4a76b8" stroke-width="1"/><path d="M8,15 C8,12 10,10.500 11,8" stroke="#fff" stroke-width="1.200" fill="none" opacity="0.800"/></g></svg>
<svg style="left:75.9px;top:276.3px" width="24" height="24" viewBox="0 0 24 24"><ellipse cx="13" cy="21.5" rx="9" ry="2" fill="url(#tsh)"/><path d="M20.500,4.500 C18,6 16.500,7 15,9 L12,6.500 C10,5.500 7.500,6.500 6,8.500 C4.500,10.500 4,13 5,15 L3.500,20.500 C3.500,22 5.500,22 6,20.500 L8,16.500 C10,17.500 13,17 14.500,15 C16,13 17.500,10 21.500,7.500 Z" fill="#f6dcc4" stroke="#a8580e" stroke-width="1"/><path d="M8,9.500 C9.500,10 10,11.500 9.500,13 M10.500,8 C12,9 12.500,10.500 12,12.500 M6.500,11.500 C7.500,12.500 7.500,14 7,15.500" stroke="#a8580e" stroke-width="0.800" fill="none"/></svg>
<svg style="left:110.9px;top:276.3px" width="24" height="24" viewBox="0 0 24 24"><ellipse cx="12" cy="20.500" rx="8" ry="1.600" fill="url(#tsh)"/><path d="M12,13 L21.500,3.500" stroke="#3a3a3a" stroke-width="2.400" stroke-linecap="round"/><circle cx="9.500" cy="14.500" r="6" fill="#3c4446" stroke="#222" stroke-width="0.900"/><path d="M5.500,12.500 A4.500,4.500 0 0 1 11,9.800" stroke="#8a9496" stroke-width="1" fill="none"/></svg>
<div style="left:79px;top:322.5px;width:37px;height:26.5px;background:#fff;border-right:1.5px solid #000;border-bottom:1.5px solid #000;border-top:1px solid #f8f8f8;"></div>
<div style="left:62.5px;top:308.5px;width:36px;height:25.5px;background:#000;"></div>
<div style="left:66.7px;top:342.4px;width:7px;height:7px;background:#fff;border:1px solid #aaa;"></div>
<div style="left:62.6px;top:338.7px;width:6.6px;height:6.6px;background:#000;"></div>
<svg style="left:104px;top:307px" width="14" height="14" viewBox="0 0 14 14"><path d="M1,4 L4,1 V3 H8.500 Q11,3 11,5.500 V9 H13 L10,12.500 L7,9 H9 V5.800 Q9,5 8.200,5 H4 V7 Z" fill="#fdfdfd" stroke="#9a9a9a" stroke-width="0.800"/></svg>
<svg style="left:199px;top:58px" width="28" height="48" viewBox="0 0 28 48">
<polygon points="1,7 6,11 7.500,46.500 3,38" fill="#04104a"/>
<polygon points="6,11 27,5 25.500,37 7.500,46.500" fill="#0a5f9a"/>
<polygon points="1,7 21,1 27,5 6,11" fill="#1a9af0"/>
<path d="M8,17 L24,12.500 M10,22 L22,18.500" stroke="#1a86d8" stroke-width="2" opacity="0.800"/>
<path d="M7.500,29 C8,35 12,37 16,36.500 C21,36 24.500,32 24.500,26.500 Z" fill="#b9781f"/>
<ellipse cx="16" cy="27.700" rx="8.600" ry="3" fill="#f0b248" transform="rotate(-8 16 27.700)"/>
<ellipse cx="18" cy="27.500" rx="3" ry="1.500" fill="#ffe9a0" transform="rotate(-8 18 27.500)"/>
</svg>
<svg style="left:243.500px;top:76px" width="12" height="12" viewBox="0 0 12 12"><rect x="0.500" y="0.500" width="10.500" height="10.500" rx="1.800" fill="#fbfbfb" stroke="#8a8a8a"/><path d="M3,3 L8.500,8.500 M8.500,3 L3,8.500" stroke="#666" stroke-width="1.900"/></svg>
<svg style="left:17px;top:1026.5px" width="14" height="14" viewBox="0 0 14 14"><rect x="0.500" y="0.500" width="13" height="13" rx="1" fill="#5a82c0" stroke="#2a4a8a"/><rect x="2" y="1" width="10" height="5" fill="#e03a3a"/><rect x="2" y="2.500" width="10" height="3.500" fill="#fff"/><rect x="3.500" y="8" width="7" height="5" fill="#dcdcdc" stroke="#6a7a9a" stroke-width="0.600"/><rect x="5" y="9.500" width="2" height="2.500" fill="#445"/></svg>
<svg style="left:59.5px;top:1026.5px" width="14" height="14" viewBox="0 0 14 14"><rect x="0.500" y="0.500" width="13" height="13" rx="1" fill="#5a82c0" stroke="#2a4a8a"/><rect x="2" y="1" width="10" height="5" fill="#e03a3a"/><rect x="2" y="2.500" width="10" height="3.500" fill="#fff"/><rect x="3.500" y="8" width="7" height="5" fill="#dcdcdc" stroke="#6a7a9a" stroke-width="0.600"/><rect x="5" y="9.500" width="2" height="2.500" fill="#445"/><path d="M4,5.500 C7,3.500 10.500,5.500 10,9.500 L12,9 L9.500,12.500 L7,9.800 L8.800,9.800 C9,7.500 7,6.300 4,5.500 Z" fill="#f2cf2a" stroke="#9a7a0a" stroke-width="0.600"/></svg>
<svg style="left:102px;top:1025.5px" width="13" height="15" viewBox="0 0 13 15"><path d="M2,4 H11 L10,13 C8,14.3 5,14.3 3,13 Z" fill="#777" stroke="#444" stroke-width="0.8"/><ellipse cx="6.5" cy="3.5" rx="5" ry="2.2" fill="#999" stroke="#444" stroke-width="0.8"/><path d="M4.5,6 V12 M6.5,6.3 V12.5 M8.5,6 V12" stroke="#555" stroke-width="0.7"/></svg>
<svg style="left:146.5px;top:1026px" width="14" height="15" viewBox="0 0 14 15"><path d="M5.5,1.2 H12.5 V11 H7.5 V8.3 H9.8 V3.8 H5.5 Z" fill="#f5d34a" stroke="#b8960a" stroke-width="0.9"/><path d="M1,4 L5.5,0.5 L5.5,7.5 Z" fill="#f5d34a" stroke="#b8960a" stroke-width="0.9" transform="translate(0.3,-1.3) scale(0.85)"/><circle cx="4" cy="11.2" r="2.6" fill="#4a7cc0" stroke="#2a4e8e" stroke-width="0.7"/></svg>
<svg style="left:1732px;top:1025.5px" width="15" height="15" viewBox="0 0 15 15"><rect x="0.5" y="2.5" width="11" height="11" rx="1" fill="#fbfbfb" stroke="#8a8a8a"/><path d="M3,6 h6 M3,8.5 h4" stroke="#bbb" stroke-width="0.8"/><path d="M5,11.5 L6,8.5 L12,1.5 L14,3.5 L8,10.5 Z" fill="#e8a33a" stroke="#7a5a1a" stroke-width="0.7"/><path d="M5,11.5 L6,8.5 L8,10.5 Z" fill="#333"/></svg>
<svg style="left:1770px;top:1026px" width="13" height="15" viewBox="0 0 13 15"><path d="M1.5,0.5 H8 L11.5,4 V13.5 H1.5 Z" fill="#fafafa" stroke="#aaa" stroke-width="0.9"/><path d="M8,0.5 V4 H11.5" fill="#e8e8e8" stroke="#aaa" stroke-width="0.8"/></svg>
<svg style="left:1807px;top:1026.5px" width="14" height="14" viewBox="0 0 14 14"><rect x="0.5" y="0.5" width="9" height="9" fill="#5a78b0" stroke="#3a4a78"/><rect x="1.8" y="1.8" width="6.4" height="3" fill="#c8d4ec"/><rect x="4.5" y="4.5" width="9" height="9" fill="#5a78b0" stroke="#3a4a78"/><rect x="5.8" y="5.8" width="6.4" height="3" fill="#dfe6f5"/></svg>
<svg style="left:1846px;top:1026px" width="13" height="15" viewBox="0 0 13 15"><g opacity="0.65"><path d="M2,4 H11 L10,13 C8,14.3 5,14.3 3,13 Z" fill="#777" stroke="#444" stroke-width="0.8"/><ellipse cx="6.5" cy="3.5" rx="5" ry="2.2" fill="#999" stroke="#444" stroke-width="0.8"/><path d="M4.5,6 V12 M6.5,6.3 V12.5 M8.5,6 V12" stroke="#555" stroke-width="0.7"/></g></svg>
<svg style="left:1884px;top:1026px" width="16" height="14" viewBox="0 0 16 14"><path d="M2,6 C3,2 8,0.500 11.500,3 L13,1.500 L13.500,6.500 L8.500,6 L10,4.500 C8,3 5,3.500 4,6 Z" fill="#4a86d8" stroke="#1f4a94" stroke-width="0.700"/><path d="M14,8 C13,12 8,13.500 4.500,11 L3,12.500 L2.500,7.500 L7.500,8 L6,9.500 C8,11 11,10.500 12,8 Z" fill="#4a86d8" stroke="#1f4a94" stroke-width="0.700"/></svg>
<div style="left:0px;top:1040px;width:1913px;height:9px;background:#1f2327;"></div>
<div style="left:0px;top:1040px;width:41px;height:9px;background:#202020;"></div>
<div style="left:41px;top:1040px;width:344px;height:9px;background:#343434;"></div>
<div style="left:730px;top:1040px;width:48px;height:9px;background:#4f4f4f;"></div>
<div style="left:556px;top:1046px;width:5px;height:3px;background:#ddd;"></div>
<div style="left:596px;top:1047px;width:22px;height:2px;background:#eee;"></div>
<div style="left:644px;top:1047px;width:24px;height:2px;background:#eee;"></div>
<div class="t" style="left:1814px;top:1042.5px;height:16px;line-height:16px;font-size:12px;color:#fff;white-space:nowrap;transform-origin:0 50%;transform:scaleX(0.866);">12:02</div>
<div style="left:1908px;top:1040px;width:1px;height:9px;background:#8a8a8a;"></div>
</body></html>
